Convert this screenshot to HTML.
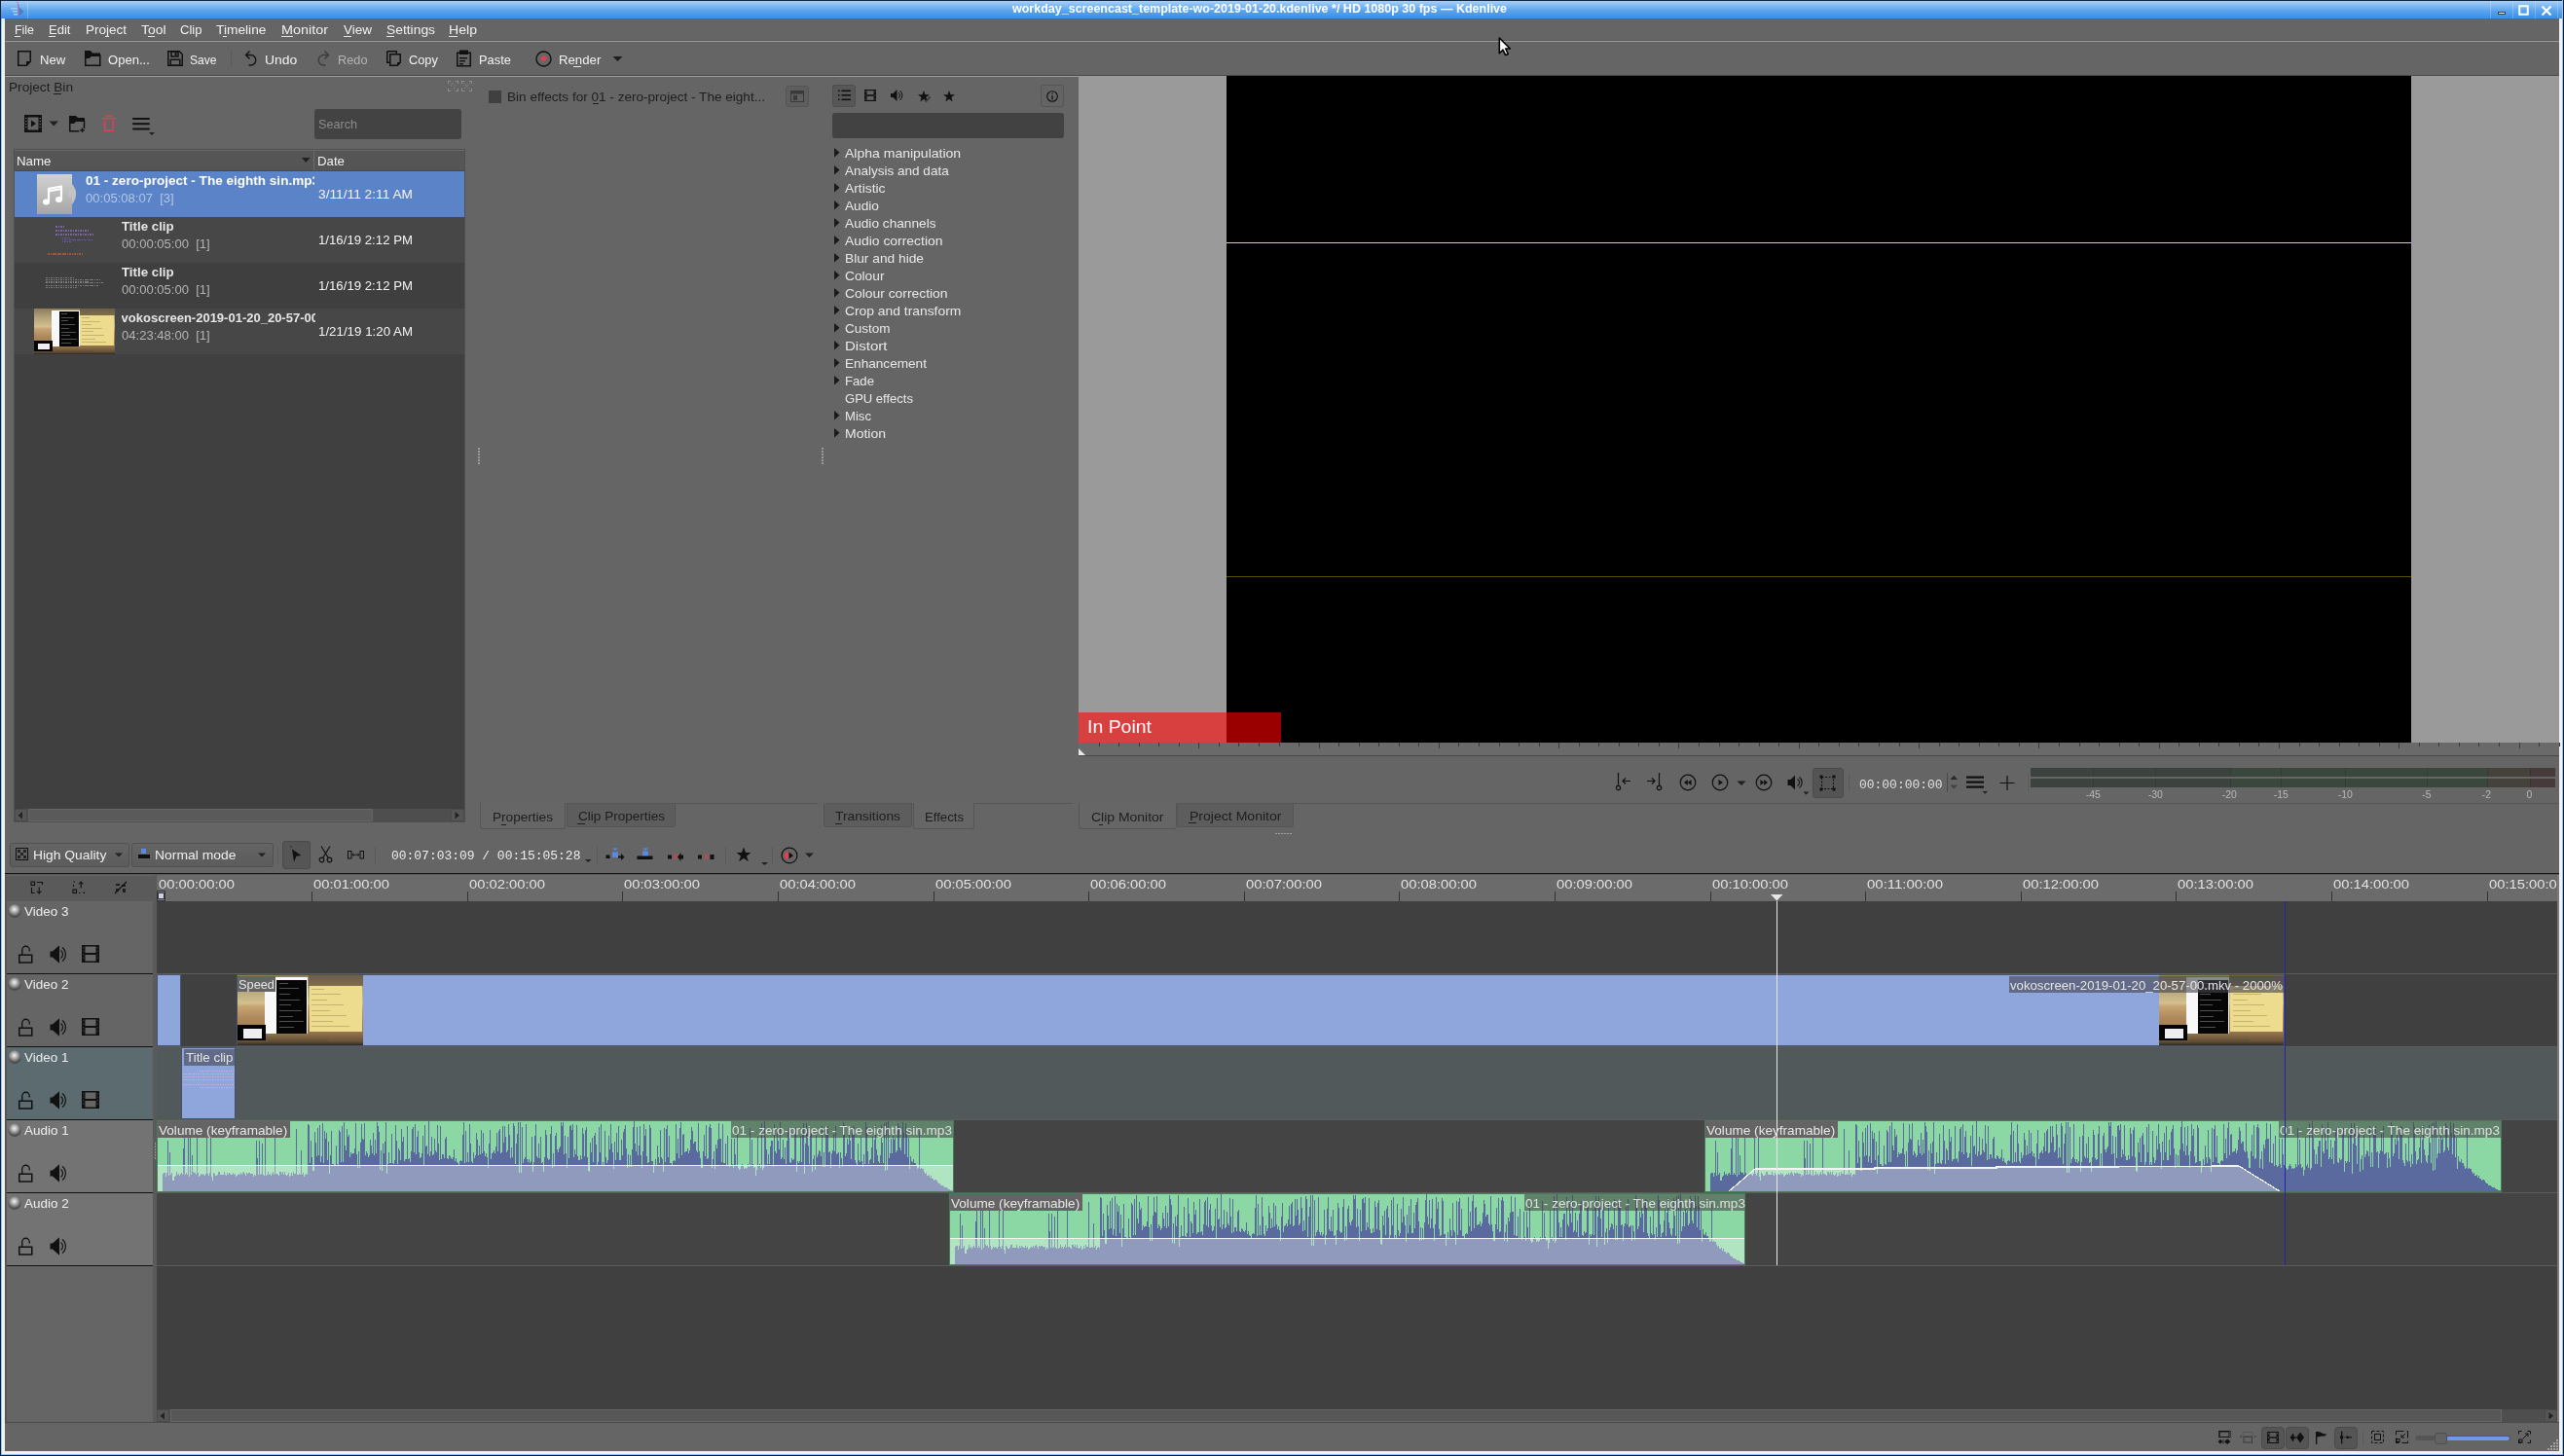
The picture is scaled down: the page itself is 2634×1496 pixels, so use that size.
<!DOCTYPE html><html><head><meta charset="utf-8"><style>
*{margin:0;padding:0;box-sizing:border-box}
html,body{width:2634px;height:1496px;overflow:hidden;background:#646464;font-family:"Liberation Sans",sans-serif}
div,svg{position:absolute}
.t{white-space:pre}
</style></head><body><div id="root" style="left:0;top:0;width:2634px;height:1496px;overflow:hidden;will-change:transform;background:#646464"><div style="left:0px;top:0px;width:2634px;height:1496px;background:#0c1c30;"></div><div style="left:1px;top:0px;width:2632px;height:1495px;background:#8cc2f8;"></div><div style="left:2px;top:19px;width:2630px;height:1475px;background:#f2f2f2;"></div><div style="left:5px;top:19px;width:2624px;height:1472px;background:#656565;"></div><div style="left:1px;top:0px;width:2631px;height:19px;background:linear-gradient(#a8d0f8 0px,#90c2f4 3px,#5aa4ee 10px,#3a8ae2 19px);border-top:1px solid #10243c"></div><div class="t" style="left:1040px;top:3.42px;font-size:12.5px;line-height:12.5px;color:#fff;font-weight:bold;transform:scaleX(1.0003);transform-origin:0 0;">workday_screencast_template-wo-2019-01-20.kdenlive */ HD 1080p 30 fps — Kdenlive</div><svg style="left:9px;top:2px;" width="22" height="16" viewBox="0 0 22 16"><rect x="2" y="6" width="7" height="1.5" fill="#a8cff8"/><rect x="4" y="9" width="6" height="1.5" fill="#a8cff8"/><rect x="5" y="12" width="5" height="1.5" fill="#a8cff8"/><rect x="9" y="2" width="1.5" height="13" fill="#a07ab0"/><path d="M9 1l-1.5 -1h3z" fill="#e06060"/><path d="M10.5 5l5 5l-5 5z" fill="#4a80c0"/></svg><div style="left:28px;top:2px;width:1px;height:17px;background:rgba(255,255,255,0.25);"></div><div style="left:2558px;top:1px;width:1px;height:18px;background:rgba(255,255,255,0.22);"></div><div style="left:2581px;top:1px;width:1px;height:18px;background:rgba(255,255,255,0.22);"></div><div style="left:2604px;top:1px;width:1px;height:18px;background:rgba(255,255,255,0.22);"></div><div style="left:2627px;top:1px;width:1px;height:18px;background:rgba(255,255,255,0.22);"></div><div style="left:2566px;top:12px;width:8px;height:3px;background:#fff;border:0.5px solid #345"></div><svg style="left:2587px;top:5px;" width="11" height="11" viewBox="0 0 11 11"><rect x="1.25" y="1.25" width="8.5" height="8.5" fill="none" stroke="#fff" stroke-width="2"/></svg><svg style="left:2610px;top:5px;" width="12" height="12" viewBox="0 0 12 12"><path d="M1.5 1.5L10.5 10.5M10.5 1.5L1.5 10.5" stroke="#fff" stroke-width="2.2"/></svg><div class="t" style="left:15px;top:24.00px;font-size:13px;line-height:13px;color:#f0f0f0;transform:scaleX(0.9545);transform-origin:0 0;">File</div><div class="t" style="left:50px;top:24.00px;font-size:13px;line-height:13px;color:#f0f0f0;transform:scaleX(1.0042);transform-origin:0 0;">Edit</div><div class="t" style="left:88.3px;top:24.00px;font-size:13px;line-height:13px;color:#f0f0f0;transform:scaleX(1.0378);transform-origin:0 0;">Project</div><div class="t" style="left:144.9px;top:24.00px;font-size:13px;line-height:13px;color:#f0f0f0;transform:scaleX(1.0688);transform-origin:0 0;">Tool</div><div class="t" style="left:185.3px;top:24.00px;font-size:13px;line-height:13px;color:#f0f0f0;transform:scaleX(1.0042);transform-origin:0 0;">Clip</div><div class="t" style="left:222.1px;top:24.00px;font-size:13px;line-height:13px;color:#f0f0f0;transform:scaleX(1.0584);transform-origin:0 0;">Timeline</div><div class="t" style="left:289px;top:24.00px;font-size:13px;line-height:13px;color:#f0f0f0;transform:scaleX(1.1070);transform-origin:0 0;">Monitor</div><div class="t" style="left:353.2px;top:24.00px;font-size:13px;line-height:13px;color:#f0f0f0;transform:scaleX(1.0375);transform-origin:0 0;">View</div><div class="t" style="left:397.2px;top:24.00px;font-size:13px;line-height:13px;color:#f0f0f0;transform:scaleX(1.0642);transform-origin:0 0;">Settings</div><div class="t" style="left:460.7px;top:24.00px;font-size:13px;line-height:13px;color:#f0f0f0;transform:scaleX(1.0841);transform-origin:0 0;">Help</div><div style="left:15px;top:37px;width:6px;height:1px;background:#e6e6e6;"></div><div style="left:50px;top:37px;width:7px;height:1px;background:#e6e6e6;"></div><div style="left:108px;top:37px;width:4px;height:1px;background:#e6e6e6;"></div><div style="left:152px;top:37px;width:7px;height:1px;background:#e6e6e6;"></div><div style="left:229px;top:37px;width:4px;height:1px;background:#e6e6e6;"></div><div style="left:289px;top:37px;width:12px;height:1px;background:#e6e6e6;"></div><div style="left:353px;top:37px;width:8px;height:1px;background:#e6e6e6;"></div><div style="left:397px;top:37px;width:8px;height:1px;background:#e6e6e6;"></div><div style="left:461px;top:37px;width:9px;height:1px;background:#e6e6e6;"></div><div style="left:589px;top:68px;width:8px;height:1px;background:#e6e6e6;"></div><div style="left:5px;top:41px;width:2624px;height:1px;background:#5a5a5a;"></div><div style="left:5px;top:42px;width:2624px;height:1px;background:#9c9c9c;"></div><div style="left:5px;top:77px;width:2624px;height:1px;background:#484848;"></div><div style="left:5px;top:78px;width:2624px;height:1px;background:#a0a0a0;"></div><div class="t" style="left:40.6px;top:54.70px;font-size:13px;line-height:13px;color:#f2f2f2;transform:scaleX(1.0071);transform-origin:0 0;">New</div><div class="t" style="left:110.5px;top:54.70px;font-size:13px;line-height:13px;color:#f2f2f2;transform:scaleX(1.0037);transform-origin:0 0;">Open...</div><div class="t" style="left:195.3px;top:54.70px;font-size:13px;line-height:13px;color:#f2f2f2;transform:scaleX(0.9278);transform-origin:0 0;">Save</div><div class="t" style="left:272px;top:54.70px;font-size:13px;line-height:13px;color:#f2f2f2;transform:scaleX(1.0710);transform-origin:0 0;">Undo</div><div class="t" style="left:347.2px;top:54.70px;font-size:13px;line-height:13px;color:#b4b4b4;transform:scaleX(0.9809);transform-origin:0 0;">Redo</div><div class="t" style="left:420.4px;top:54.70px;font-size:13px;line-height:13px;color:#f2f2f2;transform:scaleX(0.9816);transform-origin:0 0;">Copy</div><div class="t" style="left:492.4px;top:54.70px;font-size:13px;line-height:13px;color:#f2f2f2;transform:scaleX(0.9895);transform-origin:0 0;">Paste</div><div class="t" style="left:574.4px;top:54.70px;font-size:13px;line-height:13px;color:#f2f2f2;transform:scaleX(1.0151);transform-origin:0 0;">Render</div><svg style="left:17px;top:52px;" width="16" height="16" viewBox="0 0 16 16"><path d="M1.75 0.75h12.5v10.5l-4 4h-8.5z" fill="none" stroke="#111" stroke-width="1.5"/><path d="M14.5 11h-4.5v4.5z" fill="#111"/></svg><svg style="left:87px;top:52px;" width="17" height="16" viewBox="0 0 17 16"><path d="M0.75 4.75h15v10.5h-15z" fill="none" stroke="#111" stroke-width="1.5"/><path d="M0 0h6l2 2.5h8v3.5h-9l-2.5 2h-4.5z" fill="#111"/></svg><svg style="left:172px;top:52px;" width="16" height="16" viewBox="0 0 16 16"><path d="M0.75 0.75h11.5l3 3v11.5h-14.5z" fill="none" stroke="#111" stroke-width="1.5"/><rect x="4" y="1" width="7" height="5" fill="none" stroke="#111" stroke-width="1.5"/><rect x="7.5" y="2" width="2" height="3" fill="#111"/><rect x="3.25" y="9.25" width="9.5" height="6" fill="none" stroke="#111" stroke-width="1.5"/></svg><div style="left:237px;top:52px;width:1px;height:17px;background:#5a5a5a;"></div><svg style="left:250px;top:51px;" width="15" height="18" viewBox="0 0 15 18"><path d="M3 5.5h4.5a5.25 5.25 0 0 1 0 10.5h-2" fill="none" stroke="#111" stroke-width="1.4"/><path d="M6.5 1.5L2.5 5.5L6.5 9.5" fill="none" stroke="#111" stroke-width="1.4"/></svg><svg style="left:325px;top:51px;" width="15" height="18" viewBox="0 0 15 18"><path d="M12 5.5h-4.5a5.25 5.25 0 0 0 0 10.5h2" fill="none" stroke="#3c3c3c" stroke-width="1.4"/><path d="M8.5 1.5L12.5 5.5L8.5 9.5" fill="none" stroke="#3c3c3c" stroke-width="1.4"/></svg><svg style="left:397px;top:52px;" width="16" height="16" viewBox="0 0 16 16"><path d="M0.75 0.75h9.5v2.5" fill="none" stroke="#111" stroke-width="1.5"/><path d="M0.75 0.75v11.5h2.5" fill="none" stroke="#111" stroke-width="1.5"/><path d="M3.75 3.75h10.5v8.5l-3 3h-7.5z" fill="none" stroke="#111" stroke-width="1.5"/><path d="M14.5 12h-3.5v3.5z" fill="#111"/></svg><svg style="left:469px;top:51px;" width="16" height="18" viewBox="0 0 16 18"><rect x="0.75" y="3.25" width="13.5" height="13.5" fill="none" stroke="#111" stroke-width="1.5"/><rect x="3" y="0.5" width="9" height="4.5" fill="#111"/><rect x="3" y="8" width="8" height="1.4" fill="#111"/><rect x="3" y="11" width="6" height="1.4" fill="#111"/><rect x="3" y="14" width="4" height="1.4" fill="#111"/></svg><svg style="left:550px;top:52px;" width="17" height="17" viewBox="0 0 17 17"><circle cx="8.5" cy="8.5" r="7.5" fill="none" stroke="#111" stroke-width="1.4"/><circle cx="8.5" cy="8" r="2.8" fill="#e04050"/></svg><svg style="left:629px;top:57px;" width="11" height="7" viewBox="0 0 11 7"><path d="M0.5 1h10l-5 5z" fill="#1e1e1e"/></svg><div class="t" style="left:9px;top:82.90px;font-size:13px;line-height:13px;color:#1e1e1e;transform:scaleX(1.0497);transform-origin:0 0;">Project Bin</div><div style="left:55px;top:96px;width:8px;height:1px;background:#1e1e1e;"></div><svg style="left:460px;top:83px;" width="26" height="12" viewBox="0 0 26 12"><g fill="none" stroke="#b0b0b0" stroke-width="1" opacity="0.55"><path d="M0.5 3v-2.5h2.5M8 0.5h2.5v2.5M10.5 8v2.5h-2.5M3 10.5h-2.5v-2.5"/><path d="M14.5 3v-2.5h2.5M22 0.5h2.5v2.5M24.5 8v2.5h-2.5M17 10.5h-2.5v-2.5"/><path d="M16.5 2.5l6 6M22.5 2.5l-6 6" stroke-dasharray="1 1.2"/></g><g fill="#b0b0b0" opacity="0.6"><rect x="4.5" y="2" width="1" height="1"/><rect x="3" y="4.5" width="1" height="1"/><rect x="6.5" y="4.5" width="1" height="1"/><rect x="6" y="7.5" width="1" height="1"/></g></svg><svg style="left:25px;top:118px;" width="18" height="18" viewBox="0 0 18 18"><rect x="0" y="0" width="18" height="18" fill="#111"/><rect x="3.5" y="2.5" width="11" height="13" fill="#646464"/><g fill="#646464"><rect x="1" y="3" width="1.5" height="1.2"/><rect x="1" y="6" width="1.5" height="1.2"/><rect x="1" y="9" width="1.5" height="1.2"/><rect x="1" y="12" width="1.5" height="1.2"/><rect x="15.5" y="3" width="1.5" height="1.2"/><rect x="15.5" y="6" width="1.5" height="1.2"/><rect x="15.5" y="9" width="1.5" height="1.2"/><rect x="15.5" y="12" width="1.5" height="1.2"/></g><path d="M7 5.5l5 3.5l-5 3.5z" fill="#111"/></svg><svg style="left:50px;top:124px;" width="11" height="7" viewBox="0 0 11 7"><path d="M0.5 0.5h9.5l-4.75 5z" fill="#222"/></svg><svg style="left:71px;top:119px;" width="17" height="17" viewBox="0 0 17 17"><path d="M0.75 3v12.75h9.5" fill="none" stroke="#111" stroke-width="1.5"/><path d="M15.5 5v8" stroke="#111" stroke-width="1.5"/><path d="M0 0h7l2 2h7v4h-9l-2 2h-5z" fill="#111"/><path d="M13.5 12.5v4.5M11.25 14.75h4.5" stroke="#111" stroke-width="1.3"/></svg><svg style="left:105px;top:118px;" width="15" height="18" viewBox="0 0 15 18"><path d="M4 2.5v-1.5h6v1.5" fill="none" stroke="#e2404e" stroke-width="1.3"/><rect x="0" y="3" width="14" height="1.3" fill="#e2404e"/><path d="M2.5 5.5v10.75h8.75v-10.75" fill="none" stroke="#e2404e" stroke-width="1.3"/></svg><svg style="left:136px;top:120px;" width="24" height="20" viewBox="0 0 24 20"><rect x="0" y="1" width="18" height="2" rx="1" fill="#111"/><rect x="0" y="6.3" width="18" height="2" rx="1" fill="#111"/><rect x="0" y="11.5" width="18" height="2" rx="1" fill="#111"/><path d="M17 16h6l-3 3z" fill="#222"/></svg><div style="left:323px;top:112px;width:151px;height:31px;background:#434343;border-radius:3px"></div><div class="t" style="left:327px;top:120.50px;font-size:13px;line-height:13px;color:#8c8c8c;transform:scaleX(0.9708);transform-origin:0 0;">Search</div><div style="left:14px;top:153px;width:464px;height:692px;background:#404040;border:1px solid #505050"></div><div style="left:15px;top:154px;width:462px;height:22px;background:#555555;border-bottom:1px solid #4a4a4a"></div><div style="left:15px;top:154px;width:462px;height:1px;background:#6a6a6a;"></div><div style="left:322px;top:154px;width:1px;height:21px;background:#6c6c6c;"></div><div class="t" style="left:17px;top:159.40px;font-size:13px;line-height:13px;color:#f0f0f0;transform:scaleX(1.0234);transform-origin:0 0;">Name</div><svg style="left:310px;top:162px;" width="9" height="6" viewBox="0 0 9 6"><path d="M0 0h8.5l-4.25 5z" fill="#222"/></svg><div class="t" style="left:326px;top:159.40px;font-size:13px;line-height:13px;color:#f0f0f0;transform:scaleX(1.0193);transform-origin:0 0;">Date</div><div style="left:15px;top:176px;width:462px;height:47px;background:#5b83c7;"></div><div style="left:15px;top:223px;width:462px;height:47px;background:#474747;"></div><div style="left:15px;top:270px;width:462px;height:47px;background:#3f3f3f;"></div><div style="left:15px;top:317px;width:462px;height:47px;background:#474747;"></div><svg style="left:37px;top:178px;" width="44" height="43" viewBox="0 0 44 43"><defs><linearGradient id="gmp" x1="0" y1="0" x2="0" y2="1"><stop offset="0" stop-color="#d2d2d2"/><stop offset="1" stop-color="#a6a6a6"/></linearGradient></defs><path d="M30 7a15 15 0 0 1 0 29z" fill="#c4c4c4"/><rect x="1" y="1" width="36" height="41" fill="url(#gmp)"/><circle cx="37" cy="21" r="4" fill="#c4c4c4"/><path d="M13 29v-13l13 -2.5v13" fill="none" stroke="#fff" stroke-width="2.2"/><path d="M13 18.5l13 -2.5" stroke="#fff" stroke-width="2.2"/><ellipse cx="10.5" cy="29.5" rx="3.5" ry="3" fill="#fff"/><ellipse cx="23.5" cy="27" rx="3.5" ry="3" fill="#fff"/></svg><div style="left:88.2px;top:175.30px;width:234.8px;height:21px;overflow:hidden"><div class="t" style="left:88.2px;top:179.30px;font-size:13px;line-height:13px;color:#ffffff;font-weight:bold;transform:scaleX(1.0416);transform-origin:0 0;;left:0;top:4px">01 - zero-project - The eighth sin.mp3</div></div><div class="t" style="left:88.2px;top:196.80px;font-size:13px;line-height:13px;color:#b4c6e6;transform:scaleX(1.0036);transform-origin:0 0;">00:05:08:07  [3]</div><div class="t" style="left:327px;top:193.20px;font-size:13px;line-height:13px;color:#f4f4f4;transform:scaleX(1.0567);transform-origin:0 0;">3/11/11 2:11 AM</div><div style="left:57px;top:232px;width:10px;height:2px;background:repeating-linear-gradient(90deg,#9a7ae0 0 1.5px,transparent 1.5px 2.5px);opacity:0.6"></div><div style="left:57px;top:236px;width:35px;height:2px;background:repeating-linear-gradient(90deg,#9a7ae0 0 1.5px,transparent 1.5px 2.5px);opacity:0.6"></div><div style="left:57px;top:240px;width:39px;height:2px;background:repeating-linear-gradient(90deg,#9a7ae0 0 1.5px,transparent 1.5px 2.5px);opacity:0.6"></div><div style="left:64px;top:244px;width:8px;height:1px;background:repeating-linear-gradient(90deg,#8a6ad0 0 1.5px,transparent 1.5px 2.5px);opacity:0.6"></div><div style="left:64px;top:246px;width:32px;height:1px;background:repeating-linear-gradient(90deg,#8a6ad0 0 1.5px,transparent 1.5px 2.5px);opacity:0.6"></div><div style="left:64px;top:248px;width:10px;height:1px;background:repeating-linear-gradient(90deg,#8a6ad0 0 1.5px,transparent 1.5px 2.5px);opacity:0.6"></div><div style="left:49px;top:260px;width:36px;height:2px;background:repeating-linear-gradient(90deg,#e06030 0 1.5px,transparent 1.5px 2.5px);opacity:0.6"></div><div class="t" style="left:124.6px;top:226.00px;font-size:13px;line-height:13px;color:#e6e6e6;font-weight:bold;transform:scaleX(1.0213);transform-origin:0 0;">Title clip</div><div class="t" style="left:124.6px;top:244.20px;font-size:13px;line-height:13px;color:#b4b4b4;transform:scaleX(1.0036);transform-origin:0 0;">00:00:05:00  [1]</div><div class="t" style="left:327px;top:240.00px;font-size:13px;line-height:13px;color:#f4f4f4;transform:scaleX(1.0165);transform-origin:0 0;">1/16/19 2:12 PM</div><div style="left:47px;top:285px;width:30px;height:1px;background:repeating-linear-gradient(90deg,#c8c8c8 0 1.5px,transparent 1.5px 2.5px);opacity:0.45"></div><div style="left:47px;top:287px;width:56px;height:1px;background:repeating-linear-gradient(90deg,#c8c8c8 0 1.5px,transparent 1.5px 2.5px);opacity:0.45"></div><div style="left:47px;top:289px;width:44px;height:1px;background:repeating-linear-gradient(90deg,#c8c8c8 0 1.5px,transparent 1.5px 2.5px);opacity:0.45"></div><div style="left:47px;top:290px;width:60px;height:1px;background:repeating-linear-gradient(90deg,#c8c8c8 0 1.5px,transparent 1.5px 2.5px);opacity:0.45"></div><div style="left:47px;top:293px;width:54px;height:1px;background:repeating-linear-gradient(90deg,#c8c8c8 0 1.5px,transparent 1.5px 2.5px);opacity:0.45"></div><div style="left:47px;top:295px;width:33px;height:1px;background:repeating-linear-gradient(90deg,#c8c8c8 0 1.5px,transparent 1.5px 2.5px);opacity:0.45"></div><div class="t" style="left:124.6px;top:273.00px;font-size:13px;line-height:13px;color:#e6e6e6;font-weight:bold;transform:scaleX(1.0213);transform-origin:0 0;">Title clip</div><div class="t" style="left:124.6px;top:291.20px;font-size:13px;line-height:13px;color:#b4b4b4;transform:scaleX(1.0036);transform-origin:0 0;">00:00:05:00  [1]</div><div class="t" style="left:327px;top:287.00px;font-size:13px;line-height:13px;color:#f4f4f4;transform:scaleX(1.0165);transform-origin:0 0;">1/16/19 2:12 PM</div><div style="left:35.0px;top:317.0px;width:83.0px;height:47.0px;background:linear-gradient(#8c7c5a 0%,#b4a47a 20%,#d2c08e 40%,#c8a674 44%,#b08a5c 60%,#9a7850 80%,#6a5438 94%,#2e2a26 100%);"></div><div style="left:82.0px;top:317.0px;width:36.0px;height:7.0px;background:linear-gradient(#6e5e44,#7e6c4e);"></div><div style="left:53.0px;top:318.5px;width:28.5px;height:37.5px;background:#f8f8f8;"></div><div style="left:61.0px;top:320.0px;width:20.0px;height:36.0px;background:#060606;"></div><div style="left:62.5px;top:322.0px;width:6.0px;height:0.6px;background:#9a9a9a;opacity:0.5"></div><div style="left:62.5px;top:325.7px;width:13.0px;height:0.6px;background:#9a9a9a;opacity:0.5"></div><div style="left:62.5px;top:329.4px;width:7.0px;height:0.6px;background:#9a9a9a;opacity:0.5"></div><div style="left:62.5px;top:333.1px;width:14.0px;height:0.6px;background:#9a9a9a;opacity:0.5"></div><div style="left:62.5px;top:336.8px;width:8.0px;height:0.6px;background:#9a9a9a;opacity:0.5"></div><div style="left:62.5px;top:340.5px;width:15.0px;height:0.6px;background:#9a9a9a;opacity:0.5"></div><div style="left:62.5px;top:344.2px;width:9.0px;height:0.6px;background:#9a9a9a;opacity:0.5"></div><div style="left:62.5px;top:347.9px;width:16.0px;height:0.6px;background:#9a9a9a;opacity:0.5"></div><div style="left:62.5px;top:351.6px;width:10.0px;height:0.6px;background:#9a9a9a;opacity:0.5"></div><div style="left:82.3px;top:324.0px;width:35.0px;height:31.0px;background:#eedc8e;"></div><div style="left:84.0px;top:326.0px;width:8.0px;height:0.6px;background:#a89860;opacity:0.6"></div><div style="left:84.0px;top:329.6px;width:19.0px;height:0.6px;background:#a89860;opacity:0.6"></div><div style="left:84.0px;top:333.2px;width:10.0px;height:0.6px;background:#a89860;opacity:0.6"></div><div style="left:84.0px;top:336.8px;width:21.0px;height:0.6px;background:#a89860;opacity:0.6"></div><div style="left:84.0px;top:340.4px;width:12.0px;height:0.6px;background:#a89860;opacity:0.6"></div><div style="left:84.0px;top:344.0px;width:23.0px;height:0.6px;background:#a89860;opacity:0.6"></div><div style="left:84.0px;top:347.6px;width:14.0px;height:0.6px;background:#a89860;opacity:0.6"></div><div style="left:84.0px;top:351.2px;width:25.0px;height:0.6px;background:#a89860;opacity:0.6"></div><div style="left:35.0px;top:350.0px;width:18.8px;height:10.5px;background:#040404;"></div><div style="left:38.7px;top:352.8px;width:12.3px;height:6.5px;background:#eeeef2;"></div><div style="left:55.0px;top:357.0px;width:40.0px;height:5.0px;background:linear-gradient(#8a7048,#5a4830);"></div><div style="left:124.6px;top:316.00px;width:199.4px;height:21px;overflow:hidden"><div class="t" style="left:124.6px;top:320.00px;font-size:13px;line-height:13px;color:#e6e6e6;font-weight:bold;;left:0;top:4px">vokoscreen-2019-01-20_20-57-00.mkv</div></div><div class="t" style="left:124.6px;top:338.20px;font-size:13px;line-height:13px;color:#b4b4b4;transform:scaleX(1.0036);transform-origin:0 0;">04:23:48:00  [1]</div><div class="t" style="left:327px;top:334.00px;font-size:13px;line-height:13px;color:#f4f4f4;transform:scaleX(1.0243);transform-origin:0 0;">1/21/19 1:20 AM</div><div style="left:15px;top:831px;width:462px;height:13px;background:#4e4e4e;"></div><div style="left:15px;top:831px;width:13px;height:13px;background:#555;border:1px solid #4a4a4a"></div><svg style="left:18px;top:834px;" width="6" height="8" viewBox="0 0 6 8"><path d="M5 0v7.5l-4.5-3.75z" fill="#222"/></svg><div style="left:29px;top:831px;width:354px;height:13px;background:#5a5a5a;border:1px solid #666;border-radius:1px"></div><div style="left:463px;top:831px;width:14px;height:13px;background:#555;border:1px solid #4a4a4a"></div><svg style="left:467px;top:834px;" width="6" height="8" viewBox="0 0 6 8"><path d="M0.5 0v7.5l4.5-3.75z" fill="#222"/></svg><div style="left:491px;top:460px;width:2px;height:2px;background:#9a9a9a;"></div><div style="left:844px;top:460px;width:2px;height:2px;background:#9a9a9a;"></div><div style="left:491px;top:463px;width:2px;height:2px;background:#9a9a9a;"></div><div style="left:844px;top:463px;width:2px;height:2px;background:#9a9a9a;"></div><div style="left:491px;top:466px;width:2px;height:2px;background:#9a9a9a;"></div><div style="left:844px;top:466px;width:2px;height:2px;background:#9a9a9a;"></div><div style="left:491px;top:469px;width:2px;height:2px;background:#9a9a9a;"></div><div style="left:844px;top:469px;width:2px;height:2px;background:#9a9a9a;"></div><div style="left:491px;top:472px;width:2px;height:2px;background:#9a9a9a;"></div><div style="left:844px;top:472px;width:2px;height:2px;background:#9a9a9a;"></div><div style="left:491px;top:475px;width:2px;height:2px;background:#9a9a9a;"></div><div style="left:844px;top:475px;width:2px;height:2px;background:#9a9a9a;"></div><div style="left:502px;top:93px;width:13px;height:13px;background:#404040;"></div><div class="t" style="left:521px;top:93.20px;font-size:13px;line-height:13px;color:#1e1e1e;transform:scaleX(1.0438);transform-origin:0 0;">Bin effects for 01 - zero-project - The eight...</div><div style="left:609px;top:106px;width:6px;height:1px;background:#1e1e1e;"></div><div style="left:807px;top:88px;width:24px;height:22px;background:#5e5e5e;border:1px solid #555;border-radius:3px"></div><svg style="left:812px;top:93px;" width="14" height="12" viewBox="0 0 14 12"><rect x="0.5" y="0.5" width="13" height="11" fill="none" stroke="#3a3a3a"/><rect x="0.5" y="0.5" width="13" height="3" fill="#3a3a3a"/><rect x="3" y="5" width="4" height="5" fill="#3a3a3a"/></svg><div style="left:855px;top:87px;width:24px;height:23px;background:#575757;border:1px solid #4e4e4e;border-radius:3px"></div><svg style="left:861px;top:92px;" width="13" height="12" viewBox="0 0 13 12"><g fill="#111"><rect x="0" y="0.5" width="1.6" height="1.6"/><rect x="0" y="5" width="1.6" height="1.6"/><rect x="0" y="9.5" width="1.6" height="1.6"/><rect x="3.5" y="0.5" width="9.5" height="1.6"/><rect x="3.5" y="5" width="9.5" height="1.6"/><rect x="3.5" y="9.5" width="9.5" height="1.6"/></g></svg><svg style="left:888px;top:92px;" width="12" height="12" viewBox="0 0 12 12"><rect x="0" y="0" width="12" height="12" fill="#111"/><rect x="2.5" y="1.2" width="7" height="4" fill="#646464"/><rect x="2.5" y="6.8" width="7" height="4" fill="#646464"/><g fill="#646464"><rect x="0.7" y="1.5" width="1" height="1"/><rect x="0.7" y="5.5" width="1" height="1"/><rect x="0.7" y="9.5" width="1" height="1"/><rect x="10.3" y="1.5" width="1" height="1"/><rect x="10.3" y="5.5" width="1" height="1"/><rect x="10.3" y="9.5" width="1" height="1"/></g></svg><svg style="left:915px;top:92px;" width="13" height="12" viewBox="0 0 13 12"><path d="M0 4h2.5l4-4v12l-4-4h-2.5z" fill="#111"/><path d="M8 3a4 4 0 0 1 0 6" fill="none" stroke="#111" stroke-width="1"/><path d="M9.5 1a6.5 6.5 0 0 1 0 10" fill="none" stroke="#111" stroke-width="1"/></svg><svg style="left:943px;top:93px;" width="13" height="12" viewBox="0 0 13 12"><path d="M6 0L7.5 4.3H12L8.4 7L9.7 11.5L6 8.8L2.3 11.5L3.6 7L0 4.3H4.5Z" fill="#111"/><path d="M7 11l5-5l1.2 1.2-5 5z" fill="#3a3a3a"/></svg><svg style="left:969px;top:93px;" width="12" height="12" viewBox="0 0 12 12"><path d="M6 0L7.5 4.3H12L8.4 7L9.7 11.5L6 8.8L2.3 11.5L3.6 7L0 4.3H4.5Z" fill="#111"/></svg><div style="left:1069px;top:87px;width:24px;height:23px;background:#646464;border:1px solid #555;border-radius:3px"></div><svg style="left:1075px;top:93px;" width="12" height="12" viewBox="0 0 12 12"><circle cx="6" cy="6" r="5.3" fill="none" stroke="#111" stroke-width="1.1"/><rect x="5.4" y="5" width="1.2" height="4.5" fill="#111"/><rect x="5.4" y="2.6" width="1.2" height="1.3" fill="#111"/></svg><div style="left:855px;top:116px;width:238px;height:26px;background:#424242;border-radius:3px"></div><svg style="left:857px;top:152px;" width="6" height="10" viewBox="0 0 6 10"><path d="M0 0v9.5l5.5-4.75z" fill="#1a1a1a"/></svg><div class="t" style="left:868px;top:151.00px;font-size:13px;line-height:13px;color:#e8e8e8;transform:scaleX(1.0775);transform-origin:0 0;">Alpha manipulation</div><svg style="left:857px;top:170px;" width="6" height="10" viewBox="0 0 6 10"><path d="M0 0v9.5l5.5-4.75z" fill="#1a1a1a"/></svg><div class="t" style="left:868px;top:169.00px;font-size:13px;line-height:13px;color:#e8e8e8;transform:scaleX(1.0394);transform-origin:0 0;">Analysis and data</div><svg style="left:857px;top:188px;" width="6" height="10" viewBox="0 0 6 10"><path d="M0 0v9.5l5.5-4.75z" fill="#1a1a1a"/></svg><div class="t" style="left:868px;top:187.00px;font-size:13px;line-height:13px;color:#e8e8e8;transform:scaleX(1.0641);transform-origin:0 0;">Artistic</div><svg style="left:857px;top:206px;" width="6" height="10" viewBox="0 0 6 10"><path d="M0 0v9.5l5.5-4.75z" fill="#1a1a1a"/></svg><div class="t" style="left:868px;top:205.00px;font-size:13px;line-height:13px;color:#e8e8e8;transform:scaleX(1.0521);transform-origin:0 0;">Audio</div><svg style="left:857px;top:224px;" width="6" height="10" viewBox="0 0 6 10"><path d="M0 0v9.5l5.5-4.75z" fill="#1a1a1a"/></svg><div class="t" style="left:868px;top:223.00px;font-size:13px;line-height:13px;color:#e8e8e8;transform:scaleX(1.0524);transform-origin:0 0;">Audio channels</div><svg style="left:857px;top:242px;" width="6" height="10" viewBox="0 0 6 10"><path d="M0 0v9.5l5.5-4.75z" fill="#1a1a1a"/></svg><div class="t" style="left:868px;top:241.00px;font-size:13px;line-height:13px;color:#e8e8e8;transform:scaleX(1.0695);transform-origin:0 0;">Audio correction</div><svg style="left:857px;top:260px;" width="6" height="10" viewBox="0 0 6 10"><path d="M0 0v9.5l5.5-4.75z" fill="#1a1a1a"/></svg><div class="t" style="left:868px;top:259.00px;font-size:13px;line-height:13px;color:#e8e8e8;transform:scaleX(1.0569);transform-origin:0 0;">Blur and hide</div><svg style="left:857px;top:278px;" width="6" height="10" viewBox="0 0 6 10"><path d="M0 0v9.5l5.5-4.75z" fill="#1a1a1a"/></svg><div class="t" style="left:868px;top:277.00px;font-size:13px;line-height:13px;color:#e8e8e8;transform:scaleX(1.0571);transform-origin:0 0;">Colour</div><svg style="left:857px;top:296px;" width="6" height="10" viewBox="0 0 6 10"><path d="M0 0v9.5l5.5-4.75z" fill="#1a1a1a"/></svg><div class="t" style="left:868px;top:295.00px;font-size:13px;line-height:13px;color:#e8e8e8;transform:scaleX(1.0655);transform-origin:0 0;">Colour correction</div><svg style="left:857px;top:314px;" width="6" height="10" viewBox="0 0 6 10"><path d="M0 0v9.5l5.5-4.75z" fill="#1a1a1a"/></svg><div class="t" style="left:868px;top:313.00px;font-size:13px;line-height:13px;color:#e8e8e8;transform:scaleX(1.0650);transform-origin:0 0;">Crop and transform</div><svg style="left:857px;top:332px;" width="6" height="10" viewBox="0 0 6 10"><path d="M0 0v9.5l5.5-4.75z" fill="#1a1a1a"/></svg><div class="t" style="left:868px;top:331.00px;font-size:13px;line-height:13px;color:#e8e8e8;transform:scaleX(1.0380);transform-origin:0 0;">Custom</div><svg style="left:857px;top:350px;" width="6" height="10" viewBox="0 0 6 10"><path d="M0 0v9.5l5.5-4.75z" fill="#1a1a1a"/></svg><div class="t" style="left:868px;top:349.00px;font-size:13px;line-height:13px;color:#e8e8e8;transform:scaleX(1.1581);transform-origin:0 0;">Distort</div><svg style="left:857px;top:368px;" width="6" height="10" viewBox="0 0 6 10"><path d="M0 0v9.5l5.5-4.75z" fill="#1a1a1a"/></svg><div class="t" style="left:868px;top:367.00px;font-size:13px;line-height:13px;color:#e8e8e8;transform:scaleX(1.0467);transform-origin:0 0;">Enhancement</div><svg style="left:857px;top:386px;" width="6" height="10" viewBox="0 0 6 10"><path d="M0 0v9.5l5.5-4.75z" fill="#1a1a1a"/></svg><div class="t" style="left:868px;top:385.00px;font-size:13px;line-height:13px;color:#e8e8e8;transform:scaleX(1.0121);transform-origin:0 0;">Fade</div><div class="t" style="left:868px;top:403.00px;font-size:13px;line-height:13px;color:#e8e8e8;transform:scaleX(1.0022);transform-origin:0 0;">GPU effects</div><svg style="left:857px;top:422px;" width="6" height="10" viewBox="0 0 6 10"><path d="M0 0v9.5l5.5-4.75z" fill="#1a1a1a"/></svg><div class="t" style="left:868px;top:421.00px;font-size:13px;line-height:13px;color:#e8e8e8;transform:scaleX(1.0105);transform-origin:0 0;">Misc</div><svg style="left:857px;top:440px;" width="6" height="10" viewBox="0 0 6 10"><path d="M0 0v9.5l5.5-4.75z" fill="#1a1a1a"/></svg><div class="t" style="left:868px;top:439.00px;font-size:13px;line-height:13px;color:#e8e8e8;transform:scaleX(1.0761);transform-origin:0 0;">Motion</div><div style="left:493px;top:825px;width:347px;height:1px;background:#585858;"></div><div style="left:848px;top:825px;width:254px;height:1px;background:#585858;"></div><div style="left:1108px;top:825px;width:1521px;height:1px;background:#585858;"></div><div style="left:493px;top:825px;width:88px;height:27px;background:#666666;border:1px solid #555;border-top:none;border-radius:0 0 3px 3px"></div><div class="t" style="left:506.0px;top:832.70px;font-size:13px;line-height:13px;color:#1e1e1e;transform:scaleX(1.0461);transform-origin:0 0;">Properties</div><div style="left:582px;top:826px;width:112px;height:24px;background:#5d5d5d;border:1px solid #545454;border-top:none;border-radius:0 0 3px 3px"></div><div class="t" style="left:593.5px;top:831.70px;font-size:13px;line-height:13px;color:#1e1e1e;transform:scaleX(1.0436);transform-origin:0 0;">Clip Properties</div><div style="left:846px;top:826px;width:91px;height:24px;background:#5d5d5d;border:1px solid #545454;border-top:none;border-radius:0 0 3px 3px"></div><div class="t" style="left:858.0px;top:831.70px;font-size:13px;line-height:13px;color:#1e1e1e;transform:scaleX(1.0616);transform-origin:0 0;">Transitions</div><div style="left:938px;top:825px;width:63px;height:27px;background:#666666;border:1px solid #555;border-top:none;border-radius:0 0 3px 3px"></div><div class="t" style="left:949.5px;top:832.70px;font-size:13px;line-height:13px;color:#1e1e1e;transform:scaleX(1.0127);transform-origin:0 0;">Effects</div><div style="left:1108px;top:825px;width:101px;height:27px;background:#666666;border:1px solid #555;border-top:none;border-radius:0 0 3px 3px"></div><div class="t" style="left:1121.25px;top:832.70px;font-size:13px;line-height:13px;color:#1e1e1e;transform:scaleX(1.0739);transform-origin:0 0;">Clip Monitor</div><div style="left:1209px;top:826px;width:120px;height:24px;background:#5d5d5d;border:1px solid #545454;border-top:none;border-radius:0 0 3px 3px"></div><div class="t" style="left:1221.75px;top:831.70px;font-size:13px;line-height:13px;color:#1e1e1e;transform:scaleX(1.0808);transform-origin:0 0;">Project Monitor</div><div style="left:515px;top:847px;width:5px;height:1px;background:#1e1e1e;"></div><div style="left:593px;top:846px;width:8px;height:1px;background:#1e1e1e;"></div><div style="left:858px;top:846px;width:7px;height:1px;background:#1e1e1e;"></div><div style="left:1129px;top:847px;width:4px;height:1px;background:#1e1e1e;"></div><div style="left:1221px;top:845px;width:8px;height:1px;background:#1e1e1e;"></div><div style="left:1310px;top:856px;width:2px;height:1px;background:#a0a0a0;"></div><div style="left:1313px;top:856px;width:2px;height:1px;background:#a0a0a0;"></div><div style="left:1316px;top:856px;width:2px;height:1px;background:#a0a0a0;"></div><div style="left:1319px;top:856px;width:2px;height:1px;background:#a0a0a0;"></div><div style="left:1322px;top:856px;width:2px;height:1px;background:#a0a0a0;"></div><div style="left:1325px;top:856px;width:2px;height:1px;background:#a0a0a0;"></div><div style="left:1108px;top:78px;width:1521px;height:685px;background:#9a9a9a;"></div><div style="left:1260px;top:78px;width:1217px;height:685px;background:#000;"></div><div style="left:1260px;top:249px;width:1217px;height:1px;background:#dcd27a;"></div><div style="left:1260px;top:592px;width:1217px;height:1px;background:#5a5000;"></div><div style="left:1108px;top:732px;width:152px;height:31px;background:#d84040;"></div><div style="left:1260px;top:732px;width:56px;height:31px;background:#9a0000;"></div><div class="t" style="left:1117px;top:737.76px;font-size:18px;line-height:18px;color:#ffffff;transform:scaleX(1.0811);transform-origin:0 0;">In Point</div><div style="left:1108px;top:763px;width:1521px;height:13px;background:#6a6a6a;"></div><div style="left:1108px;top:776px;width:1521px;height:1px;background:#484848;"></div><div style="left:1129px;top:763px;width:1px;height:4px;background:#3a3a3a;"></div><div style="left:1149px;top:763px;width:1px;height:4px;background:#3a3a3a;"></div><div style="left:1170px;top:763px;width:1px;height:4px;background:#3a3a3a;"></div><div style="left:1190px;top:763px;width:1px;height:4px;background:#3a3a3a;"></div><div style="left:1211px;top:763px;width:1px;height:4px;background:#3a3a3a;"></div><div style="left:1231px;top:763px;width:1px;height:6px;background:#3a3a3a;"></div><div style="left:1252px;top:763px;width:1px;height:4px;background:#3a3a3a;"></div><div style="left:1272px;top:763px;width:1px;height:4px;background:#3a3a3a;"></div><div style="left:1293px;top:763px;width:1px;height:4px;background:#3a3a3a;"></div><div style="left:1314px;top:763px;width:1px;height:4px;background:#3a3a3a;"></div><div style="left:1334px;top:763px;width:1px;height:4px;background:#3a3a3a;"></div><div style="left:1355px;top:763px;width:1px;height:6px;background:#3a3a3a;"></div><div style="left:1375px;top:763px;width:1px;height:4px;background:#3a3a3a;"></div><div style="left:1396px;top:763px;width:1px;height:4px;background:#3a3a3a;"></div><div style="left:1416px;top:763px;width:1px;height:4px;background:#3a3a3a;"></div><div style="left:1437px;top:763px;width:1px;height:4px;background:#3a3a3a;"></div><div style="left:1457px;top:763px;width:1px;height:4px;background:#3a3a3a;"></div><div style="left:1478px;top:763px;width:1px;height:6px;background:#3a3a3a;"></div><div style="left:1498px;top:763px;width:1px;height:4px;background:#3a3a3a;"></div><div style="left:1519px;top:763px;width:1px;height:4px;background:#3a3a3a;"></div><div style="left:1540px;top:763px;width:1px;height:4px;background:#3a3a3a;"></div><div style="left:1560px;top:763px;width:1px;height:4px;background:#3a3a3a;"></div><div style="left:1581px;top:763px;width:1px;height:4px;background:#3a3a3a;"></div><div style="left:1601px;top:763px;width:1px;height:6px;background:#3a3a3a;"></div><div style="left:1622px;top:763px;width:1px;height:4px;background:#3a3a3a;"></div><div style="left:1642px;top:763px;width:1px;height:4px;background:#3a3a3a;"></div><div style="left:1663px;top:763px;width:1px;height:4px;background:#3a3a3a;"></div><div style="left:1683px;top:763px;width:1px;height:4px;background:#3a3a3a;"></div><div style="left:1704px;top:763px;width:1px;height:4px;background:#3a3a3a;"></div><div style="left:1724px;top:763px;width:1px;height:6px;background:#3a3a3a;"></div><div style="left:1745px;top:763px;width:1px;height:4px;background:#3a3a3a;"></div><div style="left:1766px;top:763px;width:1px;height:4px;background:#3a3a3a;"></div><div style="left:1786px;top:763px;width:1px;height:4px;background:#3a3a3a;"></div><div style="left:1807px;top:763px;width:1px;height:4px;background:#3a3a3a;"></div><div style="left:1827px;top:763px;width:1px;height:4px;background:#3a3a3a;"></div><div style="left:1848px;top:763px;width:1px;height:6px;background:#3a3a3a;"></div><div style="left:1868px;top:763px;width:1px;height:4px;background:#3a3a3a;"></div><div style="left:1889px;top:763px;width:1px;height:4px;background:#3a3a3a;"></div><div style="left:1909px;top:763px;width:1px;height:4px;background:#3a3a3a;"></div><div style="left:1930px;top:763px;width:1px;height:4px;background:#3a3a3a;"></div><div style="left:1951px;top:763px;width:1px;height:4px;background:#3a3a3a;"></div><div style="left:1971px;top:763px;width:1px;height:6px;background:#3a3a3a;"></div><div style="left:1992px;top:763px;width:1px;height:4px;background:#3a3a3a;"></div><div style="left:2012px;top:763px;width:1px;height:4px;background:#3a3a3a;"></div><div style="left:2033px;top:763px;width:1px;height:4px;background:#3a3a3a;"></div><div style="left:2053px;top:763px;width:1px;height:4px;background:#3a3a3a;"></div><div style="left:2074px;top:763px;width:1px;height:4px;background:#3a3a3a;"></div><div style="left:2094px;top:763px;width:1px;height:6px;background:#3a3a3a;"></div><div style="left:2115px;top:763px;width:1px;height:4px;background:#3a3a3a;"></div><div style="left:2136px;top:763px;width:1px;height:4px;background:#3a3a3a;"></div><div style="left:2156px;top:763px;width:1px;height:4px;background:#3a3a3a;"></div><div style="left:2177px;top:763px;width:1px;height:4px;background:#3a3a3a;"></div><div style="left:2197px;top:763px;width:1px;height:4px;background:#3a3a3a;"></div><div style="left:2218px;top:763px;width:1px;height:6px;background:#3a3a3a;"></div><div style="left:2238px;top:763px;width:1px;height:4px;background:#3a3a3a;"></div><div style="left:2259px;top:763px;width:1px;height:4px;background:#3a3a3a;"></div><div style="left:2279px;top:763px;width:1px;height:4px;background:#3a3a3a;"></div><div style="left:2300px;top:763px;width:1px;height:4px;background:#3a3a3a;"></div><div style="left:2320px;top:763px;width:1px;height:4px;background:#3a3a3a;"></div><div style="left:2341px;top:763px;width:1px;height:6px;background:#3a3a3a;"></div><div style="left:2362px;top:763px;width:1px;height:4px;background:#3a3a3a;"></div><div style="left:2382px;top:763px;width:1px;height:4px;background:#3a3a3a;"></div><div style="left:2403px;top:763px;width:1px;height:4px;background:#3a3a3a;"></div><div style="left:2423px;top:763px;width:1px;height:4px;background:#3a3a3a;"></div><div style="left:2444px;top:763px;width:1px;height:4px;background:#3a3a3a;"></div><div style="left:2464px;top:763px;width:1px;height:6px;background:#3a3a3a;"></div><div style="left:2485px;top:763px;width:1px;height:4px;background:#3a3a3a;"></div><div style="left:2505px;top:763px;width:1px;height:4px;background:#3a3a3a;"></div><div style="left:2526px;top:763px;width:1px;height:4px;background:#3a3a3a;"></div><div style="left:2546px;top:763px;width:1px;height:4px;background:#3a3a3a;"></div><div style="left:2567px;top:763px;width:1px;height:4px;background:#3a3a3a;"></div><div style="left:2588px;top:763px;width:1px;height:6px;background:#3a3a3a;"></div><div style="left:2608px;top:763px;width:1px;height:4px;background:#3a3a3a;"></div><div style="left:2629px;top:763px;width:1px;height:4px;background:#3a3a3a;"></div><svg style="left:1108px;top:769px;" width="8" height="8" viewBox="0 0 8 8"><path d="M0 0L7 7H0Z" fill="#e8e8e8"/></svg><div style="left:1108px;top:825px;width:1521px;height:0px;background:#000;"></div><svg style="left:1660px;top:794px;" width="20" height="20" viewBox="0 0 20 20"><path d="M2.5 0v13" stroke="#111" stroke-width="1.2"/><circle cx="2.5" cy="15.5" r="2.2" fill="none" stroke="#111" stroke-width="1.2"/><path d="M7 8.5h8M10 5.5l-3 3l3 3" fill="none" stroke="#111" stroke-width="1.2"/></svg><svg style="left:1691px;top:794px;" width="20" height="20" viewBox="0 0 20 20"><path d="M13.5 0v13" stroke="#111" stroke-width="1.2"/><circle cx="13.5" cy="15.5" r="2.2" fill="none" stroke="#111" stroke-width="1.2"/><path d="M1 8.5h8M6 5.5l3 3l-3 3" fill="none" stroke="#111" stroke-width="1.2"/></svg><svg style="left:1725px;top:795px;" width="18" height="18" viewBox="0 0 18 18"><circle cx="9" cy="9" r="7.8" fill="none" stroke="#111" stroke-width="1.2"/><path d="M8.8 6v6l-3.8-3zM12.6 6v6l-3.8-3z" fill="#111"/></svg><svg style="left:1758px;top:795px;" width="18" height="18" viewBox="0 0 18 18"><circle cx="9" cy="9" r="7.8" fill="none" stroke="#111" stroke-width="1.2"/><path d="M7.5 6v6l4.5-3z" fill="#111"/></svg><svg style="left:1784px;top:802px;" width="10" height="6" viewBox="0 0 10 6"><path d="M0.5 0.5h9l-4.5 4.5z" fill="#1e1e1e"/></svg><svg style="left:1803px;top:795px;" width="18" height="18" viewBox="0 0 18 18"><circle cx="9" cy="9" r="7.8" fill="none" stroke="#111" stroke-width="1.2"/><path d="M5.4 6v6l3.8-3zM9.2 6v6l3.8-3z" fill="#111"/></svg><svg style="left:1836px;top:795px;" width="18" height="18" viewBox="0 0 18 18"><path d="M0.5 6h3l4.5-4.5v15l-4.5-4.5h-3z" fill="#111"/><path d="M10.5 5.5a4 4 0 0 1 0 7" fill="none" stroke="#111" stroke-width="1.1"/><path d="M12.5 3.5a7 7 0 0 1 0 11" fill="none" stroke="#111" stroke-width="1.1"/></svg><svg style="left:1852px;top:813px;" width="7" height="5" viewBox="0 0 7 5"><path d="M0.5 0.5h6l-3 3z" fill="#1e1e1e"/></svg><div style="left:1862px;top:789px;width:32px;height:31px;background:#545454;border:1px solid #4a4a4a;border-radius:3px"></div><svg style="left:1869px;top:796px;" width="18" height="18" viewBox="0 0 18 18"><rect x="2.5" y="2.5" width="12" height="12" fill="none" stroke="#111" stroke-width="1.1" stroke-dasharray="2 1.5"/><g fill="#111"><rect x="0.5" y="0.5" width="3" height="3"/><rect x="13.5" y="0.5" width="3" height="3"/><rect x="0.5" y="13.5" width="3" height="3"/><rect x="13.5" y="13.5" width="3" height="3"/></g></svg><div style="left:1899px;top:795px;width:1px;height:18px;background:#5a5a5a;"></div><div class="t" style="left:1910px;top:799.54px;font-size:13px;line-height:13px;color:#e0e0e0;font-family:'Liberation Mono',monospace;transform:scaleX(0.9969);transform-origin:0 0;">00:00:00:00</div><div style="left:2000px;top:794px;width:1px;height:20px;background:#4a4a4a;"></div><svg style="left:2003px;top:796px;" width="9" height="17" viewBox="0 0 9 17"><path d="M0.5 5L4.25 0.8L8 5z" fill="#2a2a2a"/><path d="M0.5 10.5L4.25 14.8L8 10.5z" fill="#444"/></svg><svg style="left:2020px;top:797px;" width="23" height="20" viewBox="0 0 23 20"><rect x="0" y="0.5" width="18" height="2.2" fill="#111"/><rect x="0" y="5.5" width="18" height="2.2" fill="#111"/><rect x="0" y="10.5" width="18" height="2.2" fill="#111"/><path d="M16.5 16h5.5l-2.75 2.8z" fill="#222"/></svg><svg style="left:2053px;top:796px;" width="18" height="18" viewBox="0 0 18 18"><path d="M9 1v15M1.5 8.5h15" stroke="#111" stroke-width="1.2"/></svg><div style="left:2083px;top:795px;width:1px;height:18px;background:#5a5a5a;"></div><div style="left:2086px;top:789px;width:539px;height:9px;background:#3c423e;"></div><div style="left:2291px;top:789px;width:264px;height:9px;background:#3a473c;"></div><div style="left:2555px;top:789px;width:44px;height:9px;background:#44423a;"></div><div style="left:2599px;top:789px;width:26px;height:9px;background:#463a3a;"></div><div style="left:2150px;top:789px;width:1px;height:9px;background:rgba(0,0,0,0.12);"></div><div style="left:2214px;top:789px;width:1px;height:9px;background:rgba(0,0,0,0.12);"></div><div style="left:2291px;top:789px;width:1px;height:9px;background:rgba(0,0,0,0.12);"></div><div style="left:2343px;top:789px;width:1px;height:9px;background:rgba(0,0,0,0.12);"></div><div style="left:2409px;top:789px;width:1px;height:9px;background:rgba(0,0,0,0.12);"></div><div style="left:2493px;top:789px;width:1px;height:9px;background:rgba(0,0,0,0.12);"></div><div style="left:2555px;top:789px;width:1px;height:9px;background:rgba(0,0,0,0.12);"></div><div style="left:2599px;top:789px;width:1px;height:9px;background:rgba(0,0,0,0.12);"></div><div style="left:2086px;top:800px;width:539px;height:9px;background:#3c423e;"></div><div style="left:2291px;top:800px;width:264px;height:9px;background:#3a473c;"></div><div style="left:2555px;top:800px;width:44px;height:9px;background:#44423a;"></div><div style="left:2599px;top:800px;width:26px;height:9px;background:#463a3a;"></div><div style="left:2150px;top:800px;width:1px;height:9px;background:rgba(0,0,0,0.12);"></div><div style="left:2214px;top:800px;width:1px;height:9px;background:rgba(0,0,0,0.12);"></div><div style="left:2291px;top:800px;width:1px;height:9px;background:rgba(0,0,0,0.12);"></div><div style="left:2343px;top:800px;width:1px;height:9px;background:rgba(0,0,0,0.12);"></div><div style="left:2409px;top:800px;width:1px;height:9px;background:rgba(0,0,0,0.12);"></div><div style="left:2493px;top:800px;width:1px;height:9px;background:rgba(0,0,0,0.12);"></div><div style="left:2555px;top:800px;width:1px;height:9px;background:rgba(0,0,0,0.12);"></div><div style="left:2599px;top:800px;width:1px;height:9px;background:rgba(0,0,0,0.12);"></div><div style="left:2082px;top:795px;width:1px;height:20px;background:#6a6a6a;"></div><div class="t" style="left:2142.754375px;top:810.61px;font-size:10.5px;line-height:10.5px;color:#b8b8b8;">-45</div><div class="t" style="left:2206.754375px;top:810.61px;font-size:10.5px;line-height:10.5px;color:#b8b8b8;">-30</div><div class="t" style="left:2282.754375px;top:810.61px;font-size:10.5px;line-height:10.5px;color:#b8b8b8;">-20</div><div class="t" style="left:2335.754375px;top:810.61px;font-size:10.5px;line-height:10.5px;color:#b8b8b8;">-15</div><div class="t" style="left:2401.754375px;top:810.61px;font-size:10.5px;line-height:10.5px;color:#b8b8b8;">-10</div><div class="t" style="left:2488.2346875px;top:810.61px;font-size:10.5px;line-height:10.5px;color:#b8b8b8;">-5</div><div class="t" style="left:2549.7346875px;top:810.61px;font-size:10.5px;line-height:10.5px;color:#b8b8b8;">-2</div><div class="t" style="left:2595.5196875px;top:810.61px;font-size:10.5px;line-height:10.5px;color:#b8b8b8;">0</div><div style="left:10px;top:866px;width:123px;height:25px;background:linear-gradient(#646464,#5c5c5c);border:1px solid #505050;border-radius:3px"></div><svg style="left:16px;top:871px;" width="13" height="13" viewBox="0 0 13 13"><rect x="0.5" y="0.5" width="12" height="12" fill="none" stroke="#111"/><g fill="#111" opacity="0.75"><rect x="2" y="2" width="3" height="3"/><rect x="8" y="2" width="3" height="3"/><rect x="5" y="5" width="3" height="3"/><rect x="2" y="8" width="3" height="3"/><rect x="8" y="8" width="3" height="3"/></g></svg><div class="t" style="left:34.3px;top:872.00px;font-size:13px;line-height:13px;color:#efefef;transform:scaleX(1.0645);transform-origin:0 0;">High Quality</div><svg style="left:118px;top:876px;" width="9" height="6" viewBox="0 0 9 6"><path d="M0 0.5h8l-4 4z" fill="#222"/></svg><div style="left:135px;top:866px;width:146px;height:25px;background:linear-gradient(#646464,#5c5c5c);border:1px solid #505050;border-radius:3px"></div><div style="left:145px;top:872px;width:5px;height:5px;background:#5a8ae0;"></div><div style="left:142px;top:878px;width:12px;height:4px;background:#111;"></div><div class="t" style="left:159.4px;top:872.00px;font-size:13px;line-height:13px;color:#efefef;transform:scaleX(1.0686);transform-origin:0 0;">Normal mode</div><svg style="left:265px;top:876px;" width="9" height="6" viewBox="0 0 9 6"><path d="M0 0.5h8l-4 4z" fill="#222"/></svg><div style="left:285px;top:870px;width:1px;height:17px;background:#5a5a5a;"></div><div style="left:290px;top:864px;width:29px;height:29px;background:#555555;border:1px solid #4a4a4a;border-radius:3px"></div><svg style="left:297px;top:869px;" width="14" height="18" viewBox="0 0 14 18"><path d="M2 0.5v1" stroke="#111" stroke-width="1.2"/><path d="M3 3.5L12.5 10L7.5 10.8L5 16.5z" fill="#111"/></svg><svg style="left:326px;top:869px;" width="17" height="18" viewBox="0 0 17 18"><path d="M4 0.5L11 12M13 0.5L6 12" stroke="#111" stroke-width="1.2"/><circle cx="4.5" cy="14.5" r="2.3" fill="none" stroke="#111" stroke-width="1.2"/><circle cx="12.5" cy="14.5" r="2.3" fill="none" stroke="#111" stroke-width="1.2"/></svg><svg style="left:357px;top:874px;" width="18" height="9" viewBox="0 0 18 9"><rect x="0.5" y="0.5" width="3.5" height="7.5" fill="none" stroke="#111" stroke-width="1"/><rect x="13" y="0.5" width="3.5" height="7.5" fill="none" stroke="#111" stroke-width="1"/><path d="M5 4.25h7M6.5 3l-1.5 1.25 1.5 1.25M10.5 3l1.5 1.25-1.5 1.25" stroke="#111" stroke-width="0.9" fill="none"/></svg><div style="left:385px;top:870px;width:1px;height:17px;background:#5a5a5a;"></div><div class="t" style="left:401.7px;top:873.04px;font-size:13px;line-height:13px;color:#ececec;font-family:'Liberation Mono',monospace;transform:scaleX(0.9968);transform-origin:0 0;">00:07:03:09 / 00:15:05:28</div><svg style="left:601px;top:883px;" width="7" height="4" viewBox="0 0 7 4"><path d="M0 0h6.5l-3.25 3z" fill="#222"/></svg><div style="left:613px;top:870px;width:1px;height:17px;background:#5a5a5a;"></div><svg style="left:622px;top:871px;" width="20" height="14" viewBox="0 0 20 14"><path d="M7 0.5h6l-3 2.5z" fill="#5a8ae0"/><rect x="7" y="4.5" width="6" height="5.5" fill="#5a8ae0"/><rect x="0.5" y="7.5" width="4" height="3.5" fill="#111"/><path d="M13 8.5h3v-2.5l3.5 3.5-3.5 3.5v-2.5h-3z" fill="#111"/></svg><svg style="left:654px;top:871px;" width="18" height="13" viewBox="0 0 18 13"><path d="M6 0.5h6l-3 2.5z" fill="#5a8ae0"/><rect x="6" y="3.5" width="6" height="5.5" fill="#5a8ae0"/><rect x="0.5" y="8.5" width="16" height="3.5" fill="#111"/></svg><svg style="left:686px;top:876px;" width="17" height="10" viewBox="0 0 17 10"><rect x="0" y="2.5" width="4" height="4" fill="#111"/><path d="M6 1.5l4 5M10 1.5l-4 5" stroke="#e04050" stroke-width="1.2"/><path d="M16 2.5v4h-2.5v2.5l-3.5-4.5 3.5-4.5v2.5z" fill="#111"/></svg><svg style="left:717px;top:876px;" width="17" height="10" viewBox="0 0 17 10"><rect x="0" y="2.5" width="4" height="4" fill="#111"/><path d="M6.5 1.5l4 5M10.5 1.5l-4 5" stroke="#e04050" stroke-width="1.2"/><rect x="12.5" y="2" width="4" height="5" fill="#111"/></svg><div style="left:745px;top:870px;width:1px;height:17px;background:#5a5a5a;"></div><svg style="left:756px;top:870px;" width="16" height="16" viewBox="0 0 16 16"><path d="M8 0.5L10 6H15.5L11 9.5L12.8 15.2L8 11.8L3.2 15.2L5 9.5L0.5 6H6Z" fill="#111"/></svg><svg style="left:782px;top:886px;" width="8" height="4" viewBox="0 0 8 4"><path d="M0 0h7l-3.5 3z" fill="#222"/></svg><div style="left:793px;top:870px;width:1px;height:17px;background:#5a5a5a;"></div><svg style="left:802px;top:870px;" width="18" height="18" viewBox="0 0 18 18"><circle cx="9" cy="9" r="7.9" fill="none" stroke="#111" stroke-width="1.2"/><path d="M8 5v8a4 4 0 0 1 0-8z" fill="#e04050"/><path d="M8.5 5.5l4.5 3.5-4.5 3.5z" fill="#111"/></svg><svg style="left:827px;top:876px;" width="10" height="6" viewBox="0 0 10 6"><path d="M0 0.5h9l-4.5 4.5z" fill="#222"/></svg><div style="left:5px;top:897px;width:2624px;height:1px;background:#111;"></div><div style="left:5px;top:898px;width:2624px;height:1px;background:#5a5a5a;"></div><div style="left:5px;top:899px;width:2px;height:562px;background:#555;"></div><div style="left:7px;top:899px;width:150px;height:562px;background:#656565;"></div><div style="left:157px;top:899px;width:4px;height:562px;background:#5a5a5a;"></div><div style="left:7px;top:900px;width:154px;height:26px;background:#5a5a5a;"></div><svg style="left:31px;top:905px;" width="14" height="14" viewBox="0 0 14 14"><rect x="1" y="1" width="3.5" height="3.5" fill="none" stroke="#111" stroke-width="1.1"/><path d="M7 1.5h5.5v2.5M1.5 7v5.5h3" fill="none" stroke="#111" stroke-width="1.1"/><path d="M9.25 6.5v6.5M7 10.5l2.25 2.5 2.25-2.5" fill="none" stroke="#111" stroke-width="1.1"/></svg><svg style="left:74px;top:905px;" width="14" height="14" viewBox="0 0 14 14"><rect x="1" y="9" width="3.5" height="3.5" fill="none" stroke="#111" stroke-width="1.1"/><path d="M1.5 1h1.5M1.5 4v2M7 12.5h1.5M11.5 12.5h1v-1" fill="none" stroke="#111" stroke-width="1.1"/><path d="M9.25 7.5v-6.5M7 3.5l2.25-2.5 2.25 2.5" fill="none" stroke="#111" stroke-width="1.1"/></svg><svg style="left:117px;top:905px;" width="14" height="14" viewBox="0 0 14 14"><path d="M1 13L13 1" stroke="#111" stroke-width="1.1"/><g fill="#111" opacity="0.8"><rect x="2" y="3" width="4" height="2"/><rect x="8" y="4" width="4" height="2"/><rect x="2" y="8" width="3" height="3"/><rect x="9" y="8" width="3" height="4"/></g></svg><div style="left:161px;top:899px;width:2468px;height:27px;background:#6b6b6b;"></div><div class="t" style="left:163px;top:903.42px;font-size:12.5px;line-height:12.5px;color:#e2e2e2;transform:scaleX(1.1813);transform-origin:0 0;">00:00:00:00</div><div style="left:320px;top:916px;width:1px;height:10px;background:#333;"></div><div class="t" style="left:322px;top:903.42px;font-size:12.5px;line-height:12.5px;color:#e2e2e2;transform:scaleX(1.1813);transform-origin:0 0;">00:01:00:00</div><div style="left:480px;top:916px;width:1px;height:10px;background:#333;"></div><div class="t" style="left:482px;top:903.42px;font-size:12.5px;line-height:12.5px;color:#e2e2e2;transform:scaleX(1.1813);transform-origin:0 0;">00:02:00:00</div><div style="left:639px;top:916px;width:1px;height:10px;background:#333;"></div><div class="t" style="left:641px;top:903.42px;font-size:12.5px;line-height:12.5px;color:#e2e2e2;transform:scaleX(1.1813);transform-origin:0 0;">00:03:00:00</div><div style="left:799px;top:916px;width:1px;height:10px;background:#333;"></div><div class="t" style="left:801px;top:903.42px;font-size:12.5px;line-height:12.5px;color:#e2e2e2;transform:scaleX(1.1813);transform-origin:0 0;">00:04:00:00</div><div style="left:959px;top:916px;width:1px;height:10px;background:#333;"></div><div class="t" style="left:961px;top:903.42px;font-size:12.5px;line-height:12.5px;color:#e2e2e2;transform:scaleX(1.1813);transform-origin:0 0;">00:05:00:00</div><div style="left:1118px;top:916px;width:1px;height:10px;background:#333;"></div><div class="t" style="left:1120px;top:903.42px;font-size:12.5px;line-height:12.5px;color:#e2e2e2;transform:scaleX(1.1813);transform-origin:0 0;">00:06:00:00</div><div style="left:1278px;top:916px;width:1px;height:10px;background:#333;"></div><div class="t" style="left:1280px;top:903.42px;font-size:12.5px;line-height:12.5px;color:#e2e2e2;transform:scaleX(1.1813);transform-origin:0 0;">00:07:00:00</div><div style="left:1437px;top:916px;width:1px;height:10px;background:#333;"></div><div class="t" style="left:1439px;top:903.42px;font-size:12.5px;line-height:12.5px;color:#e2e2e2;transform:scaleX(1.1813);transform-origin:0 0;">00:08:00:00</div><div style="left:1597px;top:916px;width:1px;height:10px;background:#333;"></div><div class="t" style="left:1599px;top:903.42px;font-size:12.5px;line-height:12.5px;color:#e2e2e2;transform:scaleX(1.1813);transform-origin:0 0;">00:09:00:00</div><div style="left:1757px;top:916px;width:1px;height:10px;background:#333;"></div><div class="t" style="left:1759px;top:903.42px;font-size:12.5px;line-height:12.5px;color:#e2e2e2;transform:scaleX(1.1813);transform-origin:0 0;">00:10:00:00</div><div style="left:1916px;top:916px;width:1px;height:10px;background:#333;"></div><div class="t" style="left:1918px;top:903.42px;font-size:12.5px;line-height:12.5px;color:#e2e2e2;transform:scaleX(1.1980);transform-origin:0 0;">00:11:00:00</div><div style="left:2076px;top:916px;width:1px;height:10px;background:#333;"></div><div class="t" style="left:2078px;top:903.42px;font-size:12.5px;line-height:12.5px;color:#e2e2e2;transform:scaleX(1.1813);transform-origin:0 0;">00:12:00:00</div><div style="left:2235px;top:916px;width:1px;height:10px;background:#333;"></div><div class="t" style="left:2237px;top:903.42px;font-size:12.5px;line-height:12.5px;color:#e2e2e2;transform:scaleX(1.1813);transform-origin:0 0;">00:13:00:00</div><div style="left:2395px;top:916px;width:1px;height:10px;background:#333;"></div><div class="t" style="left:2397px;top:903.42px;font-size:12.5px;line-height:12.5px;color:#e2e2e2;transform:scaleX(1.1813);transform-origin:0 0;">00:14:00:00</div><div style="left:2555px;top:916px;width:1px;height:10px;background:#333;"></div><div style="left:2557px;top:899.42px;width:70px;height:20.5px;overflow:hidden"><div class="t" style="left:2557px;top:903.42px;font-size:12.5px;line-height:12.5px;color:#e2e2e2;transform:scaleX(1.1813);transform-origin:0 0;;left:0;top:4px">00:15:00:00</div></div><div style="left:161px;top:915px;width:9px;height:11px;background:#353535;"></div><div style="left:162px;top:916px;width:7px;height:1px;background:#6a80a8;"></div><div style="left:162px;top:924px;width:7px;height:1px;background:#6a80a8;"></div><div style="left:163px;top:918px;width:5px;height:5px;background:#cdd2dc;"></div><div style="left:7px;top:926px;width:150px;height:74px;background:#656565;"></div><div style="left:7px;top:1000px;width:150px;height:1px;background:#111;"></div><div style="left:161px;top:926px;width:2466px;height:74px;background:#404040;"></div><div style="left:161px;top:1000px;width:2466px;height:1px;background:#5c5c5c;"></div><svg style="left:8px;top:929px;" width="14" height="14" viewBox="0 0 14 14"><defs><radialGradient id="led" cx="0.48" cy="0.38" r="0.62"><stop offset="0" stop-color="#f4f4f4"/><stop offset="0.35" stop-color="#b4b4b4"/><stop offset="0.8" stop-color="#5a5a5a"/><stop offset="1" stop-color="#3a3a3a"/></radialGradient></defs><circle cx="7" cy="7" r="6.7" fill="url(#led)"/></svg><div class="t" style="left:25.1px;top:929.80px;font-size:13px;line-height:13px;color:#eeeeee;transform:scaleX(1.0350);transform-origin:0 0;">Video 3</div><svg style="left:19px;top:971px;" width="15" height="19" viewBox="0 0 15 19"><path d="M3.75 10v-5a3.75 3.75 0 0 1 7.5 0v1.5" fill="none" stroke="#111" stroke-width="1.3"/><rect x="0.75" y="10.25" width="13" height="7.75" fill="none" stroke="#111" stroke-width="1.5"/></svg><svg style="left:51px;top:971px;" width="19" height="19" viewBox="0 0 19 19"><rect x="0.5" y="6.5" width="2.5" height="6" fill="#111"/><path d="M3 6.5l7-6.3v18.6l-7-6.3z" fill="#111"/><path d="M11.5 5.5a5 5 0 0 1 0 8" fill="none" stroke="#111" stroke-width="1.2"/><path d="M13 2.5a9 9 0 0 1 0 14" fill="none" stroke="#111" stroke-width="1.2"/></svg><svg style="left:84px;top:971px;" width="18" height="18" viewBox="0 0 18 18"><rect x="0" y="0" width="18" height="18" fill="#111"/><rect x="3.5" y="1.5" width="11" height="6.5" fill="#666" class="fh"/><rect x="3.5" y="10" width="11" height="6.5" fill="#666" class="fh"/><g fill="#3a3a3a"><rect x="1.2" y="2" width="1.2" height="1.5"/><rect x="1.2" y="5.5" width="1.2" height="1.5"/><rect x="1.2" y="9" width="1.2" height="1.5"/><rect x="1.2" y="12.5" width="1.2" height="1.5"/><rect x="15.6" y="2" width="1.2" height="1.5"/><rect x="15.6" y="5.5" width="1.2" height="1.5"/><rect x="15.6" y="9" width="1.2" height="1.5"/><rect x="15.6" y="12.5" width="1.2" height="1.5"/></g></svg><div style="left:7px;top:1001px;width:150px;height:74px;background:#656565;"></div><div style="left:7px;top:1075px;width:150px;height:1px;background:#111;"></div><div style="left:161px;top:1001px;width:2466px;height:74px;background:#404040;"></div><div style="left:161px;top:1075px;width:2466px;height:1px;background:#5c5c5c;"></div><svg style="left:8px;top:1004px;" width="14" height="14" viewBox="0 0 14 14"><defs><radialGradient id="led" cx="0.48" cy="0.38" r="0.62"><stop offset="0" stop-color="#f4f4f4"/><stop offset="0.35" stop-color="#b4b4b4"/><stop offset="0.8" stop-color="#5a5a5a"/><stop offset="1" stop-color="#3a3a3a"/></radialGradient></defs><circle cx="7" cy="7" r="6.7" fill="url(#led)"/></svg><div class="t" style="left:25.1px;top:1004.80px;font-size:13px;line-height:13px;color:#eeeeee;transform:scaleX(1.0350);transform-origin:0 0;">Video 2</div><svg style="left:19px;top:1046px;" width="15" height="19" viewBox="0 0 15 19"><path d="M3.75 10v-5a3.75 3.75 0 0 1 7.5 0v1.5" fill="none" stroke="#111" stroke-width="1.3"/><rect x="0.75" y="10.25" width="13" height="7.75" fill="none" stroke="#111" stroke-width="1.5"/></svg><svg style="left:51px;top:1046px;" width="19" height="19" viewBox="0 0 19 19"><rect x="0.5" y="6.5" width="2.5" height="6" fill="#111"/><path d="M3 6.5l7-6.3v18.6l-7-6.3z" fill="#111"/><path d="M11.5 5.5a5 5 0 0 1 0 8" fill="none" stroke="#111" stroke-width="1.2"/><path d="M13 2.5a9 9 0 0 1 0 14" fill="none" stroke="#111" stroke-width="1.2"/></svg><svg style="left:84px;top:1046px;" width="18" height="18" viewBox="0 0 18 18"><rect x="0" y="0" width="18" height="18" fill="#111"/><rect x="3.5" y="1.5" width="11" height="6.5" fill="#666" class="fh"/><rect x="3.5" y="10" width="11" height="6.5" fill="#666" class="fh"/><g fill="#3a3a3a"><rect x="1.2" y="2" width="1.2" height="1.5"/><rect x="1.2" y="5.5" width="1.2" height="1.5"/><rect x="1.2" y="9" width="1.2" height="1.5"/><rect x="1.2" y="12.5" width="1.2" height="1.5"/><rect x="15.6" y="2" width="1.2" height="1.5"/><rect x="15.6" y="5.5" width="1.2" height="1.5"/><rect x="15.6" y="9" width="1.2" height="1.5"/><rect x="15.6" y="12.5" width="1.2" height="1.5"/></g></svg><div style="left:7px;top:1076px;width:150px;height:74px;background:#5b6b6f;"></div><div style="left:7px;top:1150px;width:150px;height:1px;background:#111;"></div><div style="left:161px;top:1076px;width:2466px;height:74px;background:#51595b;"></div><div style="left:161px;top:1150px;width:2466px;height:1px;background:#5c5c5c;"></div><svg style="left:8px;top:1079px;" width="14" height="14" viewBox="0 0 14 14"><defs><radialGradient id="led" cx="0.48" cy="0.38" r="0.62"><stop offset="0" stop-color="#f4f4f4"/><stop offset="0.35" stop-color="#b4b4b4"/><stop offset="0.8" stop-color="#5a5a5a"/><stop offset="1" stop-color="#3a3a3a"/></radialGradient></defs><circle cx="7" cy="7" r="6.7" fill="url(#led)"/></svg><div class="t" style="left:25.1px;top:1079.80px;font-size:13px;line-height:13px;color:#eeeeee;transform:scaleX(1.0350);transform-origin:0 0;">Video 1</div><svg style="left:19px;top:1121px;" width="15" height="19" viewBox="0 0 15 19"><path d="M3.75 10v-5a3.75 3.75 0 0 1 7.5 0v1.5" fill="none" stroke="#111" stroke-width="1.3"/><rect x="0.75" y="10.25" width="13" height="7.75" fill="none" stroke="#111" stroke-width="1.5"/></svg><svg style="left:51px;top:1121px;" width="19" height="19" viewBox="0 0 19 19"><rect x="0.5" y="6.5" width="2.5" height="6" fill="#111"/><path d="M3 6.5l7-6.3v18.6l-7-6.3z" fill="#111"/><path d="M11.5 5.5a5 5 0 0 1 0 8" fill="none" stroke="#111" stroke-width="1.2"/><path d="M13 2.5a9 9 0 0 1 0 14" fill="none" stroke="#111" stroke-width="1.2"/></svg><svg style="left:84px;top:1121px;" width="18" height="18" viewBox="0 0 18 18"><rect x="0" y="0" width="18" height="18" fill="#111"/><rect x="3.5" y="1.5" width="11" height="6.5" fill="#666" class="fh"/><rect x="3.5" y="10" width="11" height="6.5" fill="#666" class="fh"/><g fill="#3a3a3a"><rect x="1.2" y="2" width="1.2" height="1.5"/><rect x="1.2" y="5.5" width="1.2" height="1.5"/><rect x="1.2" y="9" width="1.2" height="1.5"/><rect x="1.2" y="12.5" width="1.2" height="1.5"/><rect x="15.6" y="2" width="1.2" height="1.5"/><rect x="15.6" y="5.5" width="1.2" height="1.5"/><rect x="15.6" y="9" width="1.2" height="1.5"/><rect x="15.6" y="12.5" width="1.2" height="1.5"/></g></svg><div style="left:7px;top:1151px;width:150px;height:74px;background:#737373;"></div><div style="left:7px;top:1225px;width:150px;height:1px;background:#111;"></div><div style="left:161px;top:1151px;width:2466px;height:74px;background:#444444;"></div><div style="left:161px;top:1225px;width:2466px;height:1px;background:#5c5c5c;"></div><svg style="left:8px;top:1154px;" width="14" height="14" viewBox="0 0 14 14"><defs><radialGradient id="led" cx="0.48" cy="0.38" r="0.62"><stop offset="0" stop-color="#f4f4f4"/><stop offset="0.35" stop-color="#b4b4b4"/><stop offset="0.8" stop-color="#5a5a5a"/><stop offset="1" stop-color="#3a3a3a"/></radialGradient></defs><circle cx="7" cy="7" r="6.7" fill="url(#led)"/></svg><div class="t" style="left:25.1px;top:1154.80px;font-size:13px;line-height:13px;color:#eeeeee;transform:scaleX(1.0350);transform-origin:0 0;">Audio 1</div><svg style="left:19px;top:1196px;" width="15" height="19" viewBox="0 0 15 19"><path d="M3.75 10v-5a3.75 3.75 0 0 1 7.5 0v1.5" fill="none" stroke="#111" stroke-width="1.3"/><rect x="0.75" y="10.25" width="13" height="7.75" fill="none" stroke="#111" stroke-width="1.5"/></svg><svg style="left:51px;top:1196px;" width="19" height="19" viewBox="0 0 19 19"><rect x="0.5" y="6.5" width="2.5" height="6" fill="#111"/><path d="M3 6.5l7-6.3v18.6l-7-6.3z" fill="#111"/><path d="M11.5 5.5a5 5 0 0 1 0 8" fill="none" stroke="#111" stroke-width="1.2"/><path d="M13 2.5a9 9 0 0 1 0 14" fill="none" stroke="#111" stroke-width="1.2"/></svg><div style="left:7px;top:1226px;width:150px;height:74px;background:#737373;"></div><div style="left:7px;top:1300px;width:150px;height:1px;background:#111;"></div><div style="left:161px;top:1226px;width:2466px;height:74px;background:#444444;"></div><div style="left:161px;top:1300px;width:2466px;height:1px;background:#5c5c5c;"></div><svg style="left:8px;top:1229px;" width="14" height="14" viewBox="0 0 14 14"><defs><radialGradient id="led" cx="0.48" cy="0.38" r="0.62"><stop offset="0" stop-color="#f4f4f4"/><stop offset="0.35" stop-color="#b4b4b4"/><stop offset="0.8" stop-color="#5a5a5a"/><stop offset="1" stop-color="#3a3a3a"/></radialGradient></defs><circle cx="7" cy="7" r="6.7" fill="url(#led)"/></svg><div class="t" style="left:25.1px;top:1229.80px;font-size:13px;line-height:13px;color:#eeeeee;transform:scaleX(1.0350);transform-origin:0 0;">Audio 2</div><svg style="left:19px;top:1271px;" width="15" height="19" viewBox="0 0 15 19"><path d="M3.75 10v-5a3.75 3.75 0 0 1 7.5 0v1.5" fill="none" stroke="#111" stroke-width="1.3"/><rect x="0.75" y="10.25" width="13" height="7.75" fill="none" stroke="#111" stroke-width="1.5"/></svg><svg style="left:51px;top:1271px;" width="19" height="19" viewBox="0 0 19 19"><rect x="0.5" y="6.5" width="2.5" height="6" fill="#111"/><path d="M3 6.5l7-6.3v18.6l-7-6.3z" fill="#111"/><path d="M11.5 5.5a5 5 0 0 1 0 8" fill="none" stroke="#111" stroke-width="1.2"/><path d="M13 2.5a9 9 0 0 1 0 14" fill="none" stroke="#111" stroke-width="1.2"/></svg><div style="left:7px;top:1301px;width:150px;height:160px;background:#656565;"></div><div style="left:159px;top:1174px;width:1px;height:2px;background:#9a9a9a;"></div><div style="left:159px;top:1177px;width:1px;height:2px;background:#9a9a9a;"></div><div style="left:159px;top:1180px;width:1px;height:2px;background:#9a9a9a;"></div><div style="left:159px;top:1183px;width:1px;height:2px;background:#9a9a9a;"></div><div style="left:159px;top:1186px;width:1px;height:2px;background:#9a9a9a;"></div><div style="left:159px;top:1189px;width:1px;height:2px;background:#9a9a9a;"></div><div style="left:161px;top:1301px;width:2466px;height:147px;background:#404040;"></div><div style="left:2627px;top:899px;width:2px;height:562px;background:#7a7a7a;"></div><div style="left:161px;top:1001px;width:25px;height:74px;background:#8ea6dc;border:1px solid #46526c"></div><div style="left:243px;top:1001px;width:2104px;height:74px;background:#8ea6dc;border:1px solid #46526c"></div><div style="left:244.0px;top:1002.0px;width:129.0px;height:72.0px;background:linear-gradient(#8c7c5a 0%,#b4a47a 20%,#d2c08e 40%,#c8a674 44%,#b08a5c 60%,#9a7850 80%,#6a5438 94%,#2e2a26 100%);"></div><div style="left:317.05px;top:1002.0px;width:55.95px;height:10.72px;background:linear-gradient(#6e5e44,#7e6c4e);"></div><div style="left:271.98px;top:1004.3px;width:44.3px;height:57.45px;background:#f8f8f8;"></div><div style="left:284.41px;top:1006.6px;width:31.08px;height:55.15px;background:#060606;"></div><div style="left:286.74px;top:1009.66px;width:9.33px;height:0.92px;background:#9a9a9a;opacity:0.5"></div><div style="left:286.74px;top:1015.33px;width:20.2px;height:0.92px;background:#9a9a9a;opacity:0.5"></div><div style="left:286.74px;top:1021.0px;width:10.88px;height:0.92px;background:#9a9a9a;opacity:0.5"></div><div style="left:286.74px;top:1026.66px;width:21.76px;height:0.92px;background:#9a9a9a;opacity:0.5"></div><div style="left:286.74px;top:1032.33px;width:12.43px;height:0.92px;background:#9a9a9a;opacity:0.5"></div><div style="left:286.74px;top:1038.0px;width:23.31px;height:0.92px;background:#9a9a9a;opacity:0.5"></div><div style="left:286.74px;top:1043.67px;width:13.99px;height:0.92px;background:#9a9a9a;opacity:0.5"></div><div style="left:286.74px;top:1049.34px;width:24.87px;height:0.92px;background:#9a9a9a;opacity:0.5"></div><div style="left:286.74px;top:1055.0px;width:15.54px;height:0.92px;background:#9a9a9a;opacity:0.5"></div><div style="left:317.51px;top:1012.72px;width:54.4px;height:47.49px;background:#eedc8e;"></div><div style="left:320.16px;top:1015.79px;width:12.43px;height:0.92px;background:#a89860;opacity:0.6"></div><div style="left:320.16px;top:1021.3px;width:29.53px;height:0.92px;background:#a89860;opacity:0.6"></div><div style="left:320.16px;top:1026.82px;width:15.54px;height:0.92px;background:#a89860;opacity:0.6"></div><div style="left:320.16px;top:1032.33px;width:32.64px;height:0.92px;background:#a89860;opacity:0.6"></div><div style="left:320.16px;top:1037.85px;width:18.65px;height:0.92px;background:#a89860;opacity:0.6"></div><div style="left:320.16px;top:1043.36px;width:35.75px;height:0.92px;background:#a89860;opacity:0.6"></div><div style="left:320.16px;top:1048.88px;width:21.76px;height:0.92px;background:#a89860;opacity:0.6"></div><div style="left:320.16px;top:1054.39px;width:38.86px;height:0.92px;background:#a89860;opacity:0.6"></div><div style="left:244.0px;top:1052.55px;width:29.22px;height:16.09px;background:#040404;"></div><div style="left:249.75px;top:1056.84px;width:19.12px;height:9.96px;background:#eeeef2;"></div><div style="left:275.08px;top:1063.28px;width:62.17px;height:7.66px;background:linear-gradient(#8a7048,#5a4830);"></div><div style="left:2218.0px;top:1002.0px;width:128.0px;height:72.0px;background:linear-gradient(#8c7c5a 0%,#b4a47a 20%,#d2c08e 40%,#c8a674 44%,#b08a5c 60%,#9a7850 80%,#6a5438 94%,#2e2a26 100%);"></div><div style="left:2290.48px;top:1002.0px;width:55.52px;height:10.72px;background:linear-gradient(#6e5e44,#7e6c4e);"></div><div style="left:2245.76px;top:1004.3px;width:43.95px;height:57.45px;background:#f8f8f8;"></div><div style="left:2258.1px;top:1006.6px;width:30.84px;height:55.15px;background:#060606;"></div><div style="left:2260.41px;top:1009.66px;width:9.25px;height:0.92px;background:#9a9a9a;opacity:0.5"></div><div style="left:2260.41px;top:1015.33px;width:20.05px;height:0.92px;background:#9a9a9a;opacity:0.5"></div><div style="left:2260.41px;top:1021.0px;width:10.8px;height:0.92px;background:#9a9a9a;opacity:0.5"></div><div style="left:2260.41px;top:1026.66px;width:21.59px;height:0.92px;background:#9a9a9a;opacity:0.5"></div><div style="left:2260.41px;top:1032.33px;width:12.34px;height:0.92px;background:#9a9a9a;opacity:0.5"></div><div style="left:2260.41px;top:1038.0px;width:23.13px;height:0.92px;background:#9a9a9a;opacity:0.5"></div><div style="left:2260.41px;top:1043.67px;width:13.88px;height:0.92px;background:#9a9a9a;opacity:0.5"></div><div style="left:2260.41px;top:1049.34px;width:24.67px;height:0.92px;background:#9a9a9a;opacity:0.5"></div><div style="left:2260.41px;top:1055.0px;width:15.42px;height:0.92px;background:#9a9a9a;opacity:0.5"></div><div style="left:2290.94px;top:1012.72px;width:53.98px;height:47.49px;background:#eedc8e;"></div><div style="left:2293.57px;top:1015.79px;width:12.34px;height:0.92px;background:#a89860;opacity:0.6"></div><div style="left:2293.57px;top:1021.3px;width:29.3px;height:0.92px;background:#a89860;opacity:0.6"></div><div style="left:2293.57px;top:1026.82px;width:15.42px;height:0.92px;background:#a89860;opacity:0.6"></div><div style="left:2293.57px;top:1032.33px;width:32.39px;height:0.92px;background:#a89860;opacity:0.6"></div><div style="left:2293.57px;top:1037.85px;width:18.51px;height:0.92px;background:#a89860;opacity:0.6"></div><div style="left:2293.57px;top:1043.36px;width:35.47px;height:0.92px;background:#a89860;opacity:0.6"></div><div style="left:2293.57px;top:1048.88px;width:21.59px;height:0.92px;background:#a89860;opacity:0.6"></div><div style="left:2293.57px;top:1054.39px;width:38.55px;height:0.92px;background:#a89860;opacity:0.6"></div><div style="left:2218.0px;top:1052.55px;width:28.99px;height:16.09px;background:#040404;"></div><div style="left:2223.71px;top:1056.84px;width:18.97px;height:9.96px;background:#eeeef2;"></div><div style="left:2248.84px;top:1063.28px;width:61.69px;height:7.66px;background:linear-gradient(#8a7048,#5a4830);"></div><div style="left:244px;top:1003px;width:39px;height:16px;background:#646464;"></div><div class="t" style="left:245px;top:1005.00px;font-size:13px;line-height:13px;color:#e6e6e6;transform:scaleX(0.9838);transform-origin:0 0;">Speed</div><div style="left:2064px;top:1003px;width:283px;height:17px;background:rgba(70,70,80,0.62);"></div><div class="t" style="left:2065px;top:1005.50px;font-size:13px;line-height:13px;color:#e6e6e6;transform:scaleX(1.0140);transform-origin:0 0;">vokoscreen-2019-01-20_20-57-00.mkv - 2000%</div><div style="left:186px;top:1076px;width:56px;height:74px;background:#8ea6dc;border:1px solid #46526c"></div><div style="left:189px;top:1078px;width:52px;height:17px;background:rgba(70,70,80,0.62);"></div><div class="t" style="left:191px;top:1080.00px;font-size:13px;line-height:13px;color:#e6e6e6;transform:scaleX(1.0275);transform-origin:0 0;">Title clip</div><div style="left:205px;top:1100px;width:36px;height:1px;background:repeating-linear-gradient(90deg,rgba(235,180,210,0.6) 0 1.5px,transparent 1.5px 2.5px);"></div><div style="left:188px;top:1103px;width:53px;height:1px;background:repeating-linear-gradient(90deg,rgba(235,180,210,0.6) 0 1.5px,transparent 1.5px 2.5px);"></div><div style="left:188px;top:1106px;width:53px;height:1px;background:repeating-linear-gradient(90deg,rgba(235,180,210,0.6) 0 1.5px,transparent 1.5px 2.5px);"></div><div style="left:188px;top:1109px;width:53px;height:1px;background:repeating-linear-gradient(90deg,rgba(235,180,210,0.6) 0 1.5px,transparent 1.5px 2.5px);"></div><div style="left:188px;top:1114px;width:53px;height:1px;background:repeating-linear-gradient(90deg,rgba(235,180,210,0.6) 0 1.5px,transparent 1.5px 2.5px);"></div><div style="left:205px;top:1117px;width:36px;height:1px;background:repeating-linear-gradient(90deg,rgba(235,180,210,0.6) 0 1.5px,transparent 1.5px 2.5px);"></div><svg style="left:161px;top:1152px;shape-rendering:crispEdges" width="819" height="72" viewBox="0 0 819 72"><rect x="0" y="0" width="819" height="72" fill="#8cd8a4"/><path d="M6.5 72V53.9M7.5 72V53.1M8.5 72V53.4M9.5 72V56.6M10.5 72V52.5M11.5 72V19.7M12.5 72V55.6M13.5 72V32.4M14.5 72V55.4M15.5 72V53.3M16.5 72V60.8M17.5 72V60.8M18.5 72V56.7M19.5 72V55.8M20.5 72V52.3M21.5 72V55.4M22.5 72V54.3M23.5 72V55.8M24.5 72V53.6M25.5 72V52.7M26.5 72V55.1M27.5 72V27.7M28.5 72V11.2M29.5 72V55.2M30.5 72V53.0M31.5 72V55.3M32.5 72V0.8M33.5 72V56.6M34.5 72V7.2M35.5 72V55.1M36.5 72V34.6M37.5 72V52.4M38.5 72V53.3M39.5 72V52.5M40.5 72V55.1M41.5 72V8.6M42.5 72V53.1M43.5 72V56.5M44.5 72V56.3M45.5 72V54.0M46.5 72V55.2M47.5 72V54.2M48.5 72V55.3M49.5 72V56.3M50.5 72V53.6M51.5 72V0.4M52.5 72V54.3M53.5 72V55.6M54.5 72V53.0M55.5 72V2.8M56.5 72V56.6M57.5 72V60.8M58.5 72V53.4M59.5 72V53.9M60.5 72V56.2M61.5 72V56.0M62.5 72V55.4M63.5 72V52.2M64.5 72V52.3M65.5 72V54.5M66.5 72V54.5M67.5 72V54.9M68.5 72V55.0M69.5 72V52.4M70.5 72V54.5M71.5 72V56.3M72.5 72V53.2M73.5 72V55.1M74.5 72V53.2M75.5 72V53.7M76.5 72V55.1M77.5 72V55.4M78.5 72V53.2M79.5 72V55.4M80.5 72V53.8M81.5 72V56.6M82.5 72V55.6M83.5 72V54.6M84.5 72V53.8M85.5 72V55.1M86.5 72V53.4M87.5 72V55.1M88.5 72V52.8M89.5 72V52.3M90.5 72V54.4M91.5 72V56.0M92.5 72V52.5M93.5 72V53.6M94.5 72V53.4M95.5 72V53.2M96.5 72V53.7M97.5 72V53.9M98.5 72V53.8M99.5 72V56.6M100.5 72V54.7M101.5 72V55.7M102.5 72V19.6M103.5 72V37.9M104.5 72V55.3M105.5 72V19.9M106.5 72V55.0M107.5 72V54.0M108.5 72V22.6M109.5 72V55.4M110.5 72V56.2M111.5 72V13.7M112.5 72V56.3M113.5 72V55.2M114.5 72V52.4M115.5 72V54.8M116.5 72V53.8M117.5 72V56.1M118.5 72V54.2M119.5 72V52.3M120.5 72V55.1M121.5 72V15.6M122.5 72V53.9M123.5 72V53.9M124.5 72V55.0M125.5 72V55.7M126.5 72V52.3M127.5 72V52.4M128.5 72V54.0M129.5 72V52.3M130.5 72V54.8M131.5 72V52.3M132.5 72V55.4M133.5 72V56.2M134.5 72V54.7M135.5 72V53.2M136.5 72V56.6M137.5 72V55.5M138.5 72V53.2M139.5 72V55.5M140.5 72V52.3M141.5 72V54.0M142.5 72V53.8M143.5 72V8.2M144.5 72V55.3M145.5 72V55.2M146.5 72V54.3M147.5 72V55.1M148.5 72V30.4M149.5 72V54.6M150.5 72V52.7M151.5 72V56.6M152.5 72V54.8M153.5 72V53.5M154.5 72V54.5M155.5 72V3.4M156.5 72V4.0M157.5 72V42.5M158.5 72V20.1M159.5 72V36.7M160.5 72V51.1M161.5 72V51.1M162.5 72V10.5M163.5 72V22.4M164.5 72V36.2M165.5 72V6.7M166.5 72V34.9M167.5 72V3.7M168.5 72V41.5M169.5 72V35.6M170.5 72V1.9M171.5 72V43.0M172.5 72V9.9M173.5 72V17.8M174.5 72V11.6M175.5 72V40.4M176.5 72V21.0M177.5 72V53.7M178.5 72V35.4M179.5 72V10.4M180.5 72V44.1M181.5 72V43.8M182.5 72V45.7M183.5 72V45.5M184.5 72V24.7M185.5 72V43.7M186.5 72V44.5M187.5 72V8.7M188.5 72V10.6M189.5 72V41.5M190.5 72V4.8M191.5 72V41.6M192.5 72V1.0M193.5 72V25.2M194.5 72V30.4M195.5 72V8.2M196.5 72V15.8M197.5 72V14.1M198.5 72V36.8M199.5 72V31.6M200.5 72V33.7M201.5 72V32.9M202.5 72V32.6M203.5 72V28.3M204.5 72V2.2M205.5 72V34.1M206.5 72V47.9M207.5 72V30.6M208.5 72V48.1M209.5 72V22.4M210.5 72V2.5M211.5 72V17.9M212.5 72V19.2M213.5 72V1.5M214.5 72V34.8M215.5 72V31.4M216.5 72V33.2M217.5 72V36.5M218.5 72V34.6M219.5 72V19.4M220.5 72V24.5M221.5 72V33.4M222.5 72V11.6M223.5 72V35.2M224.5 72V18.7M225.5 72V32.5M226.5 72V0.5M227.5 72V4.8M228.5 72V10.8M229.5 72V50.2M230.5 72V30.1M231.5 72V51.4M232.5 72V22.7M233.5 72V33.1M234.5 72V21.1M235.5 72V0.7M236.5 72V53.7M237.5 72V44.3M238.5 72V31.7M239.5 72V43.4M240.5 72V42.9M241.5 72V13.2M242.5 72V43.1M243.5 72V43.5M244.5 72V40.4M245.5 72V4.4M246.5 72V20.3M247.5 72V44.1M248.5 72V27.9M249.5 72V30.3M250.5 72V40.4M251.5 72V7.5M252.5 72V20.5M253.5 72V15.7M254.5 72V41.2M255.5 72V39.2M256.5 72V38.5M257.5 72V4.5M258.5 72V38.7M259.5 72V38.2M260.5 72V41.9M261.5 72V31.4M262.5 72V8.1M263.5 72V5.7M264.5 72V31.6M265.5 72V3.2M266.5 72V33.5M267.5 72V16.3M268.5 72V9.6M269.5 72V31.9M270.5 72V38.0M271.5 72V36.5M272.5 72V33.0M273.5 72V15.3M274.5 72V46.0M275.5 72V4.3M276.5 72V25.6M277.5 72V25.0M278.5 72V34.3M279.5 72V0.4M280.5 72V35.5M281.5 72V31.1M282.5 72V16.3M283.5 72V35.2M284.5 72V34.2M285.5 72V18.4M286.5 72V29.6M287.5 72V31.6M288.5 72V3.6M289.5 72V23.1M290.5 72V40.3M291.5 72V4.6M292.5 72V38.9M293.5 72V34.3M294.5 72V34.4M295.5 72V37.6M296.5 72V18.3M297.5 72V16.1M298.5 72V37.8M299.5 72V38.5M300.5 72V34.8M301.5 72V35.9M302.5 72V37.5M303.5 72V39.2M304.5 72V36.8M305.5 72V29.2M306.5 72V40.5M307.5 72V37.8M308.5 72V42.1M309.5 72V43.0M310.5 72V45.2M311.5 72V41.3M312.5 72V40.3M313.5 72V41.3M314.5 72V14.2M315.5 72V0.7M316.5 72V42.6M317.5 72V9.9M318.5 72V41.7M319.5 72V32.0M320.5 72V42.3M321.5 72V2.9M322.5 72V22.8M323.5 72V40.6M324.5 72V43.4M325.5 72V31.6M326.5 72V38.3M327.5 72V34.7M328.5 72V11.5M329.5 72V19.0M330.5 72V34.8M331.5 72V24.9M332.5 72V34.3M333.5 72V9.0M334.5 72V33.0M335.5 72V11.8M336.5 72V31.1M337.5 72V36.2M338.5 72V33.2M339.5 72V37.3M340.5 72V48.4M341.5 72V22.8M342.5 72V8.6M343.5 72V38.7M344.5 72V32.6M345.5 72V31.8M346.5 72V30.3M347.5 72V32.9M348.5 72V26.4M349.5 72V12.1M350.5 72V31.1M351.5 72V9.6M352.5 72V8.3M353.5 72V33.0M354.5 72V31.5M355.5 72V4.6M356.5 72V21.9M357.5 72V5.1M358.5 72V16.1M359.5 72V32.2M360.5 72V29.9M361.5 72V3.1M362.5 72V13.5M363.5 72V37.7M364.5 72V26.6M365.5 72V37.3M366.5 72V1.5M367.5 72V4.5M368.5 72V44.0M369.5 72V22.5M370.5 72V13.3M371.5 72V0.6M372.5 72V53.2M373.5 72V1.1M374.5 72V53.4M375.5 72V5.9M376.5 72V43.2M377.5 72V39.4M378.5 72V37.0M379.5 72V3.2M380.5 72V39.0M381.5 72V42.1M382.5 72V38.8M383.5 72V43.4M384.5 72V41.0M385.5 72V16.0M386.5 72V51.8M387.5 72V42.0M388.5 72V14.8M389.5 72V2.5M390.5 72V36.3M391.5 72V38.3M392.5 72V23.3M393.5 72V38.0M394.5 72V16.2M395.5 72V43.2M396.5 72V42.3M397.5 72V52.3M398.5 72V36.9M399.5 72V9.2M400.5 72V13.9M401.5 72V38.3M402.5 72V40.4M403.5 72V39.4M404.5 72V12.6M405.5 72V5.0M406.5 72V48.1M407.5 72V32.5M408.5 72V47.0M409.5 72V14.6M410.5 72V11.6M411.5 72V29.3M412.5 72V32.0M413.5 72V28.2M414.5 72V25.7M415.5 72V1.2M416.5 72V5.0M417.5 72V1.4M418.5 72V33.9M419.5 72V14.6M420.5 72V33.0M421.5 72V47.5M422.5 72V15.7M423.5 72V38.1M424.5 72V4.6M425.5 72V3.7M426.5 72V8.5M427.5 72V2.7M428.5 72V36.8M429.5 72V29.4M430.5 72V34.1M431.5 72V3.9M432.5 72V36.2M433.5 72V40.3M434.5 72V39.6M435.5 72V35.1M436.5 72V38.8M437.5 72V7.2M438.5 72V13.3M439.5 72V35.7M440.5 72V8.5M441.5 72V5.8M442.5 72V37.2M443.5 72V51.4M444.5 72V51.9M445.5 72V22.2M446.5 72V31.5M447.5 72V16.8M448.5 72V42.4M449.5 72V15.0M450.5 72V12.4M451.5 72V24.0M452.5 72V44.9M453.5 72V42.0M454.5 72V6.0M455.5 72V32.2M456.5 72V2.9M457.5 72V45.0M458.5 72V41.5M459.5 72V44.8M460.5 72V9.7M461.5 72V37.4M462.5 72V43.1M463.5 72V39.6M464.5 72V15.4M465.5 72V29.4M466.5 72V2.9M467.5 72V22.8M468.5 72V32.0M469.5 72V49.0M470.5 72V20.6M471.5 72V40.2M472.5 72V11.6M473.5 72V31.9M474.5 72V5.1M475.5 72V39.5M476.5 72V39.8M477.5 72V19.0M478.5 72V35.4M479.5 72V11.4M480.5 72V8.2M481.5 72V4.0M482.5 72V27.8M483.5 72V47.9M484.5 72V34.1M485.5 72V47.2M486.5 72V34.6M487.5 72V46.5M488.5 72V28.7M489.5 72V5.9M490.5 72V0.0M491.5 72V22.6M492.5 72V31.2M493.5 72V5.7M494.5 72V35.2M495.5 72V25.3M496.5 72V4.6M497.5 72V34.6M498.5 72V47.7M499.5 72V31.1M500.5 72V2.6M501.5 72V14.6M502.5 72V8.2M503.5 72V36.2M504.5 72V43.4M505.5 72V41.5M506.5 72V4.0M507.5 72V6.9M508.5 72V41.3M509.5 72V40.7M510.5 72V52.7M511.5 72V45.5M512.5 72V39.4M513.5 72V44.9M514.5 72V24.9M515.5 72V37.1M516.5 72V42.8M517.5 72V9.2M518.5 72V37.1M519.5 72V39.1M520.5 72V51.9M521.5 72V6.7M522.5 72V41.6M523.5 72V8.1M524.5 72V4.0M525.5 72V37.4M526.5 72V15.3M527.5 72V42.5M528.5 72V42.5M529.5 72V46.1M530.5 72V40.6M531.5 72V40.0M532.5 72V40.8M533.5 72V2.9M534.5 72V32.9M535.5 72V18.2M536.5 72V38.4M537.5 72V6.7M538.5 72V1.1M539.5 72V34.5M540.5 72V13.7M541.5 72V13.2M542.5 72V32.4M543.5 72V30.6M544.5 72V30.7M545.5 72V28.4M546.5 72V32.9M547.5 72V29.9M548.5 72V19.1M549.5 72V6.2M550.5 72V9.5M551.5 72V22.9M552.5 72V21.0M553.5 72V21.0M554.5 72V29.9M555.5 72V32.3M556.5 72V1.5M557.5 72V31.1M558.5 72V38.4M559.5 72V48.1M560.5 72V48.3M561.5 72V31.0M562.5 72V13.7M563.5 72V35.7M564.5 72V3.9M565.5 72V39.1M566.5 72V37.6M567.5 72V5.8M568.5 72V3.0M569.5 72V7.0M570.5 72V48.2M571.5 72V38.7M572.5 72V30.9M573.5 72V48.6M574.5 72V23.5M575.5 72V28.0M576.5 72V18.8M577.5 72V1.5M578.5 72V17.6M579.5 72V18.1M580.5 72V42.4M581.5 72V3.4M582.5 72V43.1M583.5 72V42.9M584.5 72V22.5M585.5 72V45.5M586.5 72V14.6M587.5 72V44.5M588.5 72V47.0M589.5 72V46.0M590.5 72V18.0M591.5 72V44.3M592.5 72V47.6M593.5 72V17.7M594.5 72V33.9M595.5 72V45.1M596.5 72V11.3M597.5 72V48.1M598.5 72V49.7M599.5 72V48.9M600.5 72V45.5M601.5 72V44.4M602.5 72V46.0M603.5 72V48.8M604.5 72V47.9M605.5 72V49.2M606.5 72V47.6M607.5 72V43.9M608.5 72V47.4M609.5 72V7.4M610.5 72V45.3M611.5 72V19.0M612.5 72V43.9M613.5 72V48.3M614.5 72V47.1M615.5 72V55.9M616.5 72V49.7M617.5 72V15.7M618.5 72V46.2M619.5 72V44.1M620.5 72V48.0M621.5 72V1.8M622.5 72V49.7M623.5 72V48.2M624.5 72V0.3M625.5 72V17.3M626.5 72V29.0M627.5 72V43.6M628.5 72V33.8M629.5 72V43.5M630.5 72V26.2M631.5 72V19.8M632.5 72V19.9M633.5 72V46.9M634.5 72V3.0M635.5 72V30.8M636.5 72V32.9M637.5 72V10.0M638.5 72V19.9M639.5 72V28.7M640.5 72V1.0M641.5 72V39.1M642.5 72V37.4M643.5 72V19.4M644.5 72V39.0M645.5 72V26.8M646.5 72V44.3M647.5 72V20.2M648.5 72V8.6M649.5 72V6.7M650.5 72V42.4M651.5 72V43.0M652.5 72V38.1M653.5 72V39.9M654.5 72V38.7M655.5 72V14.4M656.5 72V6.5M657.5 72V51.9M658.5 72V40.6M659.5 72V42.8M660.5 72V40.8M661.5 72V15.0M662.5 72V41.8M663.5 72V12.4M664.5 72V1.8M665.5 72V53.8M666.5 72V23.3M667.5 72V2.4M668.5 72V8.4M669.5 72V24.8M670.5 72V44.2M671.5 72V14.7M672.5 72V8.7M673.5 72V51.9M674.5 72V39.2M675.5 72V34.6M676.5 72V50.1M677.5 72V7.3M678.5 72V36.8M679.5 72V33.7M680.5 72V29.8M681.5 72V31.3M682.5 72V35.5M683.5 72V4.9M684.5 72V46.7M685.5 72V31.9M686.5 72V46.6M687.5 72V9.0M688.5 72V5.8M689.5 72V4.5M690.5 72V31.6M691.5 72V30.6M692.5 72V47.7M693.5 72V32.9M694.5 72V29.8M695.5 72V13.4M696.5 72V30.5M697.5 72V4.9M698.5 72V34.1M699.5 72V33.0M700.5 72V32.0M701.5 72V47.8M702.5 72V32.2M703.5 72V38.0M704.5 72V47.4M705.5 72V1.4M706.5 72V3.8M707.5 72V36.0M708.5 72V33.0M709.5 72V18.4M710.5 72V24.2M711.5 72V5.0M712.5 72V19.8M713.5 72V38.6M714.5 72V11.8M715.5 72V5.1M716.5 72V5.7M717.5 72V40.1M718.5 72V42.8M719.5 72V45.7M720.5 72V23.4M721.5 72V39.9M722.5 72V42.2M723.5 72V16.0M724.5 72V41.4M725.5 72V46.7M726.5 72V33.6M727.5 72V44.3M728.5 72V1.3M729.5 72V5.9M730.5 72V30.9M731.5 72V43.8M732.5 72V40.2M733.5 72V39.2M734.5 72V26.8M735.5 72V16.2M736.5 72V43.4M737.5 72V19.1M738.5 72V3.5M739.5 72V29.2M740.5 72V35.3M741.5 72V40.5M742.5 72V42.6M743.5 72V35.1M744.5 72V3.9M745.5 72V22.1M746.5 72V42.5M747.5 72V2.4M748.5 72V50.7M749.5 72V1.2M750.5 72V50.2M751.5 72V0.4M752.5 72V38.2M753.5 72V32.8M754.5 72V18.3M755.5 72V32.8M756.5 72V15.3M757.5 72V18.8M758.5 72V17.0M759.5 72V32.3M760.5 72V29.8M761.5 72V2.2M762.5 72V4.8M763.5 72V27.2M764.5 72V30.3M765.5 72V17.4M766.5 72V0.9M767.5 72V12.4M768.5 72V34.0M769.5 72V2.2M770.5 72V12.0M771.5 72V36.7M772.5 72V17.3M773.5 72V48.8M774.5 72V36.4M775.5 72V40.6M776.5 72V41.8M777.5 72V39.0M778.5 72V42.5M779.5 72V42.6M780.5 72V45.6M781.5 72V49.1M782.5 72V47.9M783.5 72V10.0M784.5 72V49.4M785.5 72V48.4M786.5 72V49.1M787.5 72V48.5M788.5 72V51.5M789.5 72V53.8M790.5 72V53.1M791.5 72V56.1M792.5 72V56.2M793.5 72V55.1M794.5 72V57.8M795.5 72V55.9M796.5 72V58.5M797.5 72V58.7M798.5 72V61.2M799.5 72V60.4M800.5 72V60.1M801.5 72V61.2M802.5 72V62.8M803.5 72V63.6M804.5 72V63.7M805.5 72V65.6M806.5 72V65.5M807.5 72V66.1M808.5 72V66.7M809.5 72V67.8M810.5 72V68.1M811.5 72V68.3M812.5 72V68.9M813.5 72V69.9M814.5 72V70.3M815.5 72V70.5M816.5 72V71.2M817.5 72V71.4M818.5 72V71.7" stroke="#5b6a9e" stroke-width="1" fill="none"/><path d="M0 45.5H819V72H0Z" fill="rgba(255,255,255,0.32)"/><path d="M0 45.5H819" fill="none" stroke="#f4f4f4" stroke-width="1.2"/></svg><div style="left:161px;top:1151px;width:819px;height:1px;background:#4a7a5a;"></div><div style="left:161px;top:1224px;width:819px;height:1px;background:#4a7a5a;"></div><div style="left:161px;top:1151px;width:1px;height:74px;background:#4a7a5a;"></div><div style="left:979px;top:1151px;width:1px;height:74px;background:#4a7a5a;"></div><div style="left:162px;top:1152px;width:136px;height:17px;background:#646464;"></div><div class="t" style="left:162.8px;top:1155.10px;font-size:13px;line-height:13px;color:#e8e8e8;transform:scaleX(1.0453);transform-origin:0 0;">Volume (keyframable)</div><div style="left:751px;top:1152px;width:228px;height:17px;background:rgba(60,60,60,0.55);"></div><div class="t" style="left:752px;top:1154.70px;font-size:13px;line-height:13px;color:#e0e0e0;transform:scaleX(1.0435);transform-origin:0 0;">01 - zero-project - The eighth sin.mp3</div><svg style="left:975px;top:1227px;shape-rendering:crispEdges" width="818" height="72" viewBox="0 0 818 72"><rect x="0" y="0" width="818" height="72" fill="#8cd8a4"/><path d="M6.5 72V53.9M7.5 72V53.1M8.5 72V53.4M9.5 72V56.6M10.5 72V52.5M11.5 72V19.7M12.5 72V55.6M13.5 72V32.4M14.5 72V55.4M15.5 72V53.3M16.5 72V60.8M17.5 72V60.8M18.5 72V56.7M19.5 72V55.8M20.5 72V52.3M21.5 72V55.4M22.5 72V54.3M23.5 72V55.8M24.5 72V53.6M25.5 72V52.7M26.5 72V55.1M27.5 72V27.7M28.5 72V11.2M29.5 72V55.2M30.5 72V53.0M31.5 72V55.3M32.5 72V0.8M33.5 72V56.6M34.5 72V7.2M35.5 72V55.1M36.5 72V34.6M37.5 72V52.4M38.5 72V53.3M39.5 72V52.5M40.5 72V55.1M41.5 72V8.6M42.5 72V53.1M43.5 72V56.5M44.5 72V56.3M45.5 72V54.0M46.5 72V55.2M47.5 72V54.2M48.5 72V55.3M49.5 72V56.3M50.5 72V53.6M51.5 72V0.4M52.5 72V54.3M53.5 72V55.6M54.5 72V53.0M55.5 72V2.8M56.5 72V56.6M57.5 72V60.8M58.5 72V53.4M59.5 72V53.9M60.5 72V56.2M61.5 72V56.0M62.5 72V55.4M63.5 72V52.2M64.5 72V52.3M65.5 72V54.5M66.5 72V54.5M67.5 72V54.9M68.5 72V55.0M69.5 72V52.4M70.5 72V54.5M71.5 72V56.3M72.5 72V53.2M73.5 72V55.1M74.5 72V53.2M75.5 72V53.7M76.5 72V55.1M77.5 72V55.4M78.5 72V53.2M79.5 72V55.4M80.5 72V53.8M81.5 72V56.6M82.5 72V55.6M83.5 72V54.6M84.5 72V53.8M85.5 72V55.1M86.5 72V53.4M87.5 72V55.1M88.5 72V52.8M89.5 72V52.3M90.5 72V54.4M91.5 72V56.0M92.5 72V52.5M93.5 72V53.6M94.5 72V53.4M95.5 72V53.2M96.5 72V53.7M97.5 72V53.9M98.5 72V53.8M99.5 72V56.6M100.5 72V54.7M101.5 72V55.7M102.5 72V19.6M103.5 72V37.9M104.5 72V55.3M105.5 72V19.9M106.5 72V55.0M107.5 72V54.0M108.5 72V22.6M109.5 72V55.4M110.5 72V56.2M111.5 72V13.7M112.5 72V56.3M113.5 72V55.2M114.5 72V52.4M115.5 72V54.8M116.5 72V53.8M117.5 72V56.1M118.5 72V54.2M119.5 72V52.3M120.5 72V55.1M121.5 72V15.6M122.5 72V53.9M123.5 72V53.9M124.5 72V55.0M125.5 72V55.7M126.5 72V52.3M127.5 72V52.4M128.5 72V54.0M129.5 72V52.3M130.5 72V54.8M131.5 72V52.3M132.5 72V55.4M133.5 72V56.2M134.5 72V54.7M135.5 72V53.2M136.5 72V56.6M137.5 72V55.5M138.5 72V53.2M139.5 72V55.5M140.5 72V52.3M141.5 72V54.0M142.5 72V53.8M143.5 72V8.2M144.5 72V55.3M145.5 72V55.2M146.5 72V54.3M147.5 72V55.1M148.5 72V30.4M149.5 72V54.6M150.5 72V52.7M151.5 72V56.6M152.5 72V54.8M153.5 72V53.5M154.5 72V54.5M155.5 72V3.4M156.5 72V4.0M157.5 72V42.5M158.5 72V20.1M159.5 72V36.7M160.5 72V51.1M161.5 72V51.1M162.5 72V10.5M163.5 72V22.4M164.5 72V36.2M165.5 72V6.7M166.5 72V34.9M167.5 72V3.7M168.5 72V41.5M169.5 72V35.6M170.5 72V1.9M171.5 72V43.0M172.5 72V9.9M173.5 72V17.8M174.5 72V11.6M175.5 72V40.4M176.5 72V21.0M177.5 72V53.7M178.5 72V35.4M179.5 72V10.4M180.5 72V44.1M181.5 72V43.8M182.5 72V45.7M183.5 72V45.5M184.5 72V24.7M185.5 72V43.7M186.5 72V44.5M187.5 72V8.7M188.5 72V10.6M189.5 72V41.5M190.5 72V4.8M191.5 72V41.6M192.5 72V1.0M193.5 72V25.2M194.5 72V30.4M195.5 72V8.2M196.5 72V15.8M197.5 72V14.1M198.5 72V36.8M199.5 72V31.6M200.5 72V33.7M201.5 72V32.9M202.5 72V32.6M203.5 72V28.3M204.5 72V2.2M205.5 72V34.1M206.5 72V47.9M207.5 72V30.6M208.5 72V48.1M209.5 72V22.4M210.5 72V2.5M211.5 72V17.9M212.5 72V19.2M213.5 72V1.5M214.5 72V34.8M215.5 72V31.4M216.5 72V33.2M217.5 72V36.5M218.5 72V34.6M219.5 72V19.4M220.5 72V24.5M221.5 72V33.4M222.5 72V11.6M223.5 72V35.2M224.5 72V18.7M225.5 72V32.5M226.5 72V0.5M227.5 72V4.8M228.5 72V10.8M229.5 72V50.2M230.5 72V30.1M231.5 72V51.4M232.5 72V22.7M233.5 72V33.1M234.5 72V21.1M235.5 72V0.7M236.5 72V53.7M237.5 72V44.3M238.5 72V31.7M239.5 72V43.4M240.5 72V42.9M241.5 72V13.2M242.5 72V43.1M243.5 72V43.5M244.5 72V40.4M245.5 72V4.4M246.5 72V20.3M247.5 72V44.1M248.5 72V27.9M249.5 72V30.3M250.5 72V40.4M251.5 72V7.5M252.5 72V20.5M253.5 72V15.7M254.5 72V41.2M255.5 72V39.2M256.5 72V38.5M257.5 72V4.5M258.5 72V38.7M259.5 72V38.2M260.5 72V41.9M261.5 72V31.4M262.5 72V8.1M263.5 72V5.7M264.5 72V31.6M265.5 72V3.2M266.5 72V33.5M267.5 72V16.3M268.5 72V9.6M269.5 72V31.9M270.5 72V38.0M271.5 72V36.5M272.5 72V33.0M273.5 72V15.3M274.5 72V46.0M275.5 72V4.3M276.5 72V25.6M277.5 72V25.0M278.5 72V34.3M279.5 72V0.4M280.5 72V35.5M281.5 72V31.1M282.5 72V16.3M283.5 72V35.2M284.5 72V34.2M285.5 72V18.4M286.5 72V29.6M287.5 72V31.6M288.5 72V3.6M289.5 72V23.1M290.5 72V40.3M291.5 72V4.6M292.5 72V38.9M293.5 72V34.3M294.5 72V34.4M295.5 72V37.6M296.5 72V18.3M297.5 72V16.1M298.5 72V37.8M299.5 72V38.5M300.5 72V34.8M301.5 72V35.9M302.5 72V37.5M303.5 72V39.2M304.5 72V36.8M305.5 72V29.2M306.5 72V40.5M307.5 72V37.8M308.5 72V42.1M309.5 72V43.0M310.5 72V45.2M311.5 72V41.3M312.5 72V40.3M313.5 72V41.3M314.5 72V14.2M315.5 72V0.7M316.5 72V42.6M317.5 72V9.9M318.5 72V41.7M319.5 72V32.0M320.5 72V42.3M321.5 72V2.9M322.5 72V22.8M323.5 72V40.6M324.5 72V43.4M325.5 72V31.6M326.5 72V38.3M327.5 72V34.7M328.5 72V11.5M329.5 72V19.0M330.5 72V34.8M331.5 72V24.9M332.5 72V34.3M333.5 72V9.0M334.5 72V33.0M335.5 72V11.8M336.5 72V31.1M337.5 72V36.2M338.5 72V33.2M339.5 72V37.3M340.5 72V48.4M341.5 72V22.8M342.5 72V8.6M343.5 72V38.7M344.5 72V32.6M345.5 72V31.8M346.5 72V30.3M347.5 72V32.9M348.5 72V26.4M349.5 72V12.1M350.5 72V31.1M351.5 72V9.6M352.5 72V8.3M353.5 72V33.0M354.5 72V31.5M355.5 72V4.6M356.5 72V21.9M357.5 72V5.1M358.5 72V16.1M359.5 72V32.2M360.5 72V29.9M361.5 72V3.1M362.5 72V13.5M363.5 72V37.7M364.5 72V26.6M365.5 72V37.3M366.5 72V1.5M367.5 72V4.5M368.5 72V44.0M369.5 72V22.5M370.5 72V13.3M371.5 72V0.6M372.5 72V53.2M373.5 72V1.1M374.5 72V53.4M375.5 72V5.9M376.5 72V43.2M377.5 72V39.4M378.5 72V37.0M379.5 72V3.2M380.5 72V39.0M381.5 72V42.1M382.5 72V38.8M383.5 72V43.4M384.5 72V41.0M385.5 72V16.0M386.5 72V51.8M387.5 72V42.0M388.5 72V14.8M389.5 72V2.5M390.5 72V36.3M391.5 72V38.3M392.5 72V23.3M393.5 72V38.0M394.5 72V16.2M395.5 72V43.2M396.5 72V42.3M397.5 72V52.3M398.5 72V36.9M399.5 72V9.2M400.5 72V13.9M401.5 72V38.3M402.5 72V40.4M403.5 72V39.4M404.5 72V12.6M405.5 72V5.0M406.5 72V48.1M407.5 72V32.5M408.5 72V47.0M409.5 72V14.6M410.5 72V11.6M411.5 72V29.3M412.5 72V32.0M413.5 72V28.2M414.5 72V25.7M415.5 72V1.2M416.5 72V5.0M417.5 72V1.4M418.5 72V33.9M419.5 72V14.6M420.5 72V33.0M421.5 72V47.5M422.5 72V15.7M423.5 72V38.1M424.5 72V4.6M425.5 72V3.7M426.5 72V8.5M427.5 72V2.7M428.5 72V36.8M429.5 72V29.4M430.5 72V34.1M431.5 72V3.9M432.5 72V36.2M433.5 72V40.3M434.5 72V39.6M435.5 72V35.1M436.5 72V38.8M437.5 72V7.2M438.5 72V13.3M439.5 72V35.7M440.5 72V8.5M441.5 72V5.8M442.5 72V37.2M443.5 72V51.4M444.5 72V51.9M445.5 72V22.2M446.5 72V31.5M447.5 72V16.8M448.5 72V42.4M449.5 72V15.0M450.5 72V12.4M451.5 72V24.0M452.5 72V44.9M453.5 72V42.0M454.5 72V6.0M455.5 72V32.2M456.5 72V2.9M457.5 72V45.0M458.5 72V41.5M459.5 72V44.8M460.5 72V9.7M461.5 72V37.4M462.5 72V43.1M463.5 72V39.6M464.5 72V15.4M465.5 72V29.4M466.5 72V2.9M467.5 72V22.8M468.5 72V32.0M469.5 72V49.0M470.5 72V20.6M471.5 72V40.2M472.5 72V11.6M473.5 72V31.9M474.5 72V5.1M475.5 72V39.5M476.5 72V39.8M477.5 72V19.0M478.5 72V35.4M479.5 72V11.4M480.5 72V8.2M481.5 72V4.0M482.5 72V27.8M483.5 72V47.9M484.5 72V34.1M485.5 72V47.2M486.5 72V34.6M487.5 72V46.5M488.5 72V28.7M489.5 72V5.9M490.5 72V0.0M491.5 72V22.6M492.5 72V31.2M493.5 72V5.7M494.5 72V35.2M495.5 72V25.3M496.5 72V4.6M497.5 72V34.6M498.5 72V47.7M499.5 72V31.1M500.5 72V2.6M501.5 72V14.6M502.5 72V8.2M503.5 72V36.2M504.5 72V43.4M505.5 72V41.5M506.5 72V4.0M507.5 72V6.9M508.5 72V41.3M509.5 72V40.7M510.5 72V52.7M511.5 72V45.5M512.5 72V39.4M513.5 72V44.9M514.5 72V24.9M515.5 72V37.1M516.5 72V42.8M517.5 72V9.2M518.5 72V37.1M519.5 72V39.1M520.5 72V51.9M521.5 72V6.7M522.5 72V41.6M523.5 72V8.1M524.5 72V4.0M525.5 72V37.4M526.5 72V15.3M527.5 72V42.5M528.5 72V42.5M529.5 72V46.1M530.5 72V40.6M531.5 72V40.0M532.5 72V40.8M533.5 72V2.9M534.5 72V32.9M535.5 72V18.2M536.5 72V38.4M537.5 72V6.7M538.5 72V1.1M539.5 72V34.5M540.5 72V13.7M541.5 72V13.2M542.5 72V32.4M543.5 72V30.6M544.5 72V30.7M545.5 72V28.4M546.5 72V32.9M547.5 72V29.9M548.5 72V19.1M549.5 72V6.2M550.5 72V9.5M551.5 72V22.9M552.5 72V21.0M553.5 72V21.0M554.5 72V29.9M555.5 72V32.3M556.5 72V1.5M557.5 72V31.1M558.5 72V38.4M559.5 72V48.1M560.5 72V48.3M561.5 72V31.0M562.5 72V13.7M563.5 72V35.7M564.5 72V3.9M565.5 72V39.1M566.5 72V37.6M567.5 72V5.8M568.5 72V3.0M569.5 72V7.0M570.5 72V48.2M571.5 72V38.7M572.5 72V30.9M573.5 72V48.6M574.5 72V23.5M575.5 72V28.0M576.5 72V18.8M577.5 72V1.5M578.5 72V17.6M579.5 72V18.1M580.5 72V42.4M581.5 72V3.4M582.5 72V43.1M583.5 72V42.9M584.5 72V22.5M585.5 72V45.5M586.5 72V14.6M587.5 72V44.5M588.5 72V47.0M589.5 72V46.0M590.5 72V18.0M591.5 72V44.3M592.5 72V47.6M593.5 72V17.7M594.5 72V33.9M595.5 72V45.1M596.5 72V11.3M597.5 72V48.1M598.5 72V49.7M599.5 72V48.9M600.5 72V45.5M601.5 72V44.4M602.5 72V46.0M603.5 72V48.8M604.5 72V47.9M605.5 72V49.2M606.5 72V47.6M607.5 72V43.9M608.5 72V47.4M609.5 72V7.4M610.5 72V45.3M611.5 72V19.0M612.5 72V43.9M613.5 72V48.3M614.5 72V47.1M615.5 72V55.9M616.5 72V49.7M617.5 72V15.7M618.5 72V46.2M619.5 72V44.1M620.5 72V48.0M621.5 72V1.8M622.5 72V49.7M623.5 72V48.2M624.5 72V0.3M625.5 72V17.3M626.5 72V29.0M627.5 72V43.6M628.5 72V33.8M629.5 72V43.5M630.5 72V26.2M631.5 72V19.8M632.5 72V19.9M633.5 72V46.9M634.5 72V3.0M635.5 72V30.8M636.5 72V32.9M637.5 72V10.0M638.5 72V19.9M639.5 72V28.7M640.5 72V1.0M641.5 72V39.1M642.5 72V37.4M643.5 72V19.4M644.5 72V39.0M645.5 72V26.8M646.5 72V44.3M647.5 72V20.2M648.5 72V8.6M649.5 72V6.7M650.5 72V42.4M651.5 72V43.0M652.5 72V38.1M653.5 72V39.9M654.5 72V38.7M655.5 72V14.4M656.5 72V6.5M657.5 72V51.9M658.5 72V40.6M659.5 72V42.8M660.5 72V40.8M661.5 72V15.0M662.5 72V41.8M663.5 72V12.4M664.5 72V1.8M665.5 72V53.8M666.5 72V23.3M667.5 72V2.4M668.5 72V8.4M669.5 72V24.8M670.5 72V44.2M671.5 72V14.7M672.5 72V8.7M673.5 72V51.9M674.5 72V39.2M675.5 72V34.6M676.5 72V50.1M677.5 72V7.3M678.5 72V36.8M679.5 72V33.7M680.5 72V29.8M681.5 72V31.3M682.5 72V35.5M683.5 72V4.9M684.5 72V46.7M685.5 72V31.9M686.5 72V46.6M687.5 72V9.0M688.5 72V5.8M689.5 72V4.5M690.5 72V31.6M691.5 72V30.6M692.5 72V47.7M693.5 72V32.9M694.5 72V29.8M695.5 72V13.4M696.5 72V30.5M697.5 72V4.9M698.5 72V34.1M699.5 72V33.0M700.5 72V32.0M701.5 72V47.8M702.5 72V32.2M703.5 72V38.0M704.5 72V47.4M705.5 72V1.4M706.5 72V3.8M707.5 72V36.0M708.5 72V33.0M709.5 72V18.4M710.5 72V24.2M711.5 72V5.0M712.5 72V19.8M713.5 72V38.6M714.5 72V11.8M715.5 72V5.1M716.5 72V5.7M717.5 72V40.1M718.5 72V42.8M719.5 72V45.7M720.5 72V23.4M721.5 72V39.9M722.5 72V42.2M723.5 72V16.0M724.5 72V41.4M725.5 72V46.7M726.5 72V33.6M727.5 72V44.3M728.5 72V1.3M729.5 72V5.9M730.5 72V30.9M731.5 72V43.8M732.5 72V40.2M733.5 72V39.2M734.5 72V26.8M735.5 72V16.2M736.5 72V43.4M737.5 72V19.1M738.5 72V3.5M739.5 72V29.2M740.5 72V35.3M741.5 72V40.5M742.5 72V42.6M743.5 72V35.1M744.5 72V3.9M745.5 72V22.1M746.5 72V42.5M747.5 72V2.4M748.5 72V50.7M749.5 72V1.2M750.5 72V50.2M751.5 72V0.4M752.5 72V38.2M753.5 72V32.8M754.5 72V18.3M755.5 72V32.8M756.5 72V15.3M757.5 72V18.8M758.5 72V17.0M759.5 72V32.3M760.5 72V29.8M761.5 72V2.2M762.5 72V4.8M763.5 72V27.2M764.5 72V30.3M765.5 72V17.4M766.5 72V0.9M767.5 72V12.4M768.5 72V34.0M769.5 72V2.2M770.5 72V12.0M771.5 72V36.7M772.5 72V17.3M773.5 72V48.8M774.5 72V36.4M775.5 72V40.6M776.5 72V41.8M777.5 72V39.0M778.5 72V42.5M779.5 72V42.6M780.5 72V45.6M781.5 72V49.1M782.5 72V47.9M783.5 72V10.0M784.5 72V49.4M785.5 72V48.4M786.5 72V49.1M787.5 72V48.5M788.5 72V51.5M789.5 72V53.8M790.5 72V53.1M791.5 72V56.1M792.5 72V56.2M793.5 72V55.1M794.5 72V57.8M795.5 72V55.9M796.5 72V58.5M797.5 72V58.7M798.5 72V61.2M799.5 72V60.4M800.5 72V60.1M801.5 72V61.2M802.5 72V62.8M803.5 72V63.6M804.5 72V63.7M805.5 72V65.6M806.5 72V65.5M807.5 72V66.1M808.5 72V66.7M809.5 72V67.8M810.5 72V68.1M811.5 72V68.3M812.5 72V68.9M813.5 72V69.9M814.5 72V70.3M815.5 72V70.5M816.5 72V71.2M817.5 72V71.4" stroke="#5b6a9e" stroke-width="1" fill="none"/><path d="M0 45.5H818V72H0Z" fill="rgba(255,255,255,0.32)"/><path d="M0 45.5H818" fill="none" stroke="#f4f4f4" stroke-width="1.2"/></svg><div style="left:975px;top:1226px;width:818px;height:1px;background:#4a7a5a;"></div><div style="left:975px;top:1299px;width:818px;height:1px;background:#4a7a5a;"></div><div style="left:975px;top:1226px;width:1px;height:74px;background:#4a7a5a;"></div><div style="left:1792px;top:1226px;width:1px;height:74px;background:#4a7a5a;"></div><div style="left:976px;top:1227px;width:136px;height:17px;background:#646464;"></div><div class="t" style="left:976.8px;top:1230.10px;font-size:13px;line-height:13px;color:#e8e8e8;transform:scaleX(1.0453);transform-origin:0 0;">Volume (keyframable)</div><div style="left:1566px;top:1227px;width:226px;height:17px;background:rgba(60,60,60,0.55);"></div><div class="t" style="left:1567px;top:1229.70px;font-size:13px;line-height:13px;color:#e0e0e0;transform:scaleX(1.0435);transform-origin:0 0;">01 - zero-project - The eighth sin.mp3</div><svg style="left:1751px;top:1152px;shape-rendering:crispEdges" width="819" height="72" viewBox="0 0 819 72"><rect x="0" y="0" width="819" height="72" fill="#8cd8a4"/><path d="M6.5 72V53.9M7.5 72V53.1M8.5 72V53.4M9.5 72V56.6M10.5 72V52.5M11.5 72V19.7M12.5 72V55.6M13.5 72V32.4M14.5 72V55.4M15.5 72V53.3M16.5 72V60.8M17.5 72V60.8M18.5 72V56.7M19.5 72V55.8M20.5 72V52.3M21.5 72V55.4M22.5 72V54.3M23.5 72V55.8M24.5 72V53.6M25.5 72V52.7M26.5 72V55.1M27.5 72V27.7M28.5 72V11.2M29.5 72V55.2M30.5 72V53.0M31.5 72V55.3M32.5 72V0.8M33.5 72V56.6M34.5 72V7.2M35.5 72V55.1M36.5 72V34.6M37.5 72V52.4M38.5 72V53.3M39.5 72V52.5M40.5 72V55.1M41.5 72V8.6M42.5 72V53.1M43.5 72V56.5M44.5 72V56.3M45.5 72V54.0M46.5 72V55.2M47.5 72V54.2M48.5 72V55.3M49.5 72V56.3M50.5 72V53.6M51.5 72V0.4M52.5 72V54.3M53.5 72V55.6M54.5 72V53.0M55.5 72V2.8M56.5 72V56.6M57.5 72V60.8M58.5 72V53.4M59.5 72V53.9M60.5 72V56.2M61.5 72V56.0M62.5 72V55.4M63.5 72V52.2M64.5 72V52.3M65.5 72V54.5M66.5 72V54.5M67.5 72V54.9M68.5 72V55.0M69.5 72V52.4M70.5 72V54.5M71.5 72V56.3M72.5 72V53.2M73.5 72V55.1M74.5 72V53.2M75.5 72V53.7M76.5 72V55.1M77.5 72V55.4M78.5 72V53.2M79.5 72V55.4M80.5 72V53.8M81.5 72V56.6M82.5 72V55.6M83.5 72V54.6M84.5 72V53.8M85.5 72V55.1M86.5 72V53.4M87.5 72V55.1M88.5 72V52.8M89.5 72V52.3M90.5 72V54.4M91.5 72V56.0M92.5 72V52.5M93.5 72V53.6M94.5 72V53.4M95.5 72V53.2M96.5 72V53.7M97.5 72V53.9M98.5 72V53.8M99.5 72V56.6M100.5 72V54.7M101.5 72V55.7M102.5 72V19.6M103.5 72V37.9M104.5 72V55.3M105.5 72V19.9M106.5 72V55.0M107.5 72V54.0M108.5 72V22.6M109.5 72V55.4M110.5 72V56.2M111.5 72V13.7M112.5 72V56.3M113.5 72V55.2M114.5 72V52.4M115.5 72V54.8M116.5 72V53.8M117.5 72V56.1M118.5 72V54.2M119.5 72V52.3M120.5 72V55.1M121.5 72V15.6M122.5 72V53.9M123.5 72V53.9M124.5 72V55.0M125.5 72V55.7M126.5 72V52.3M127.5 72V52.4M128.5 72V54.0M129.5 72V52.3M130.5 72V54.8M131.5 72V52.3M132.5 72V55.4M133.5 72V56.2M134.5 72V54.7M135.5 72V53.2M136.5 72V56.6M137.5 72V55.5M138.5 72V53.2M139.5 72V55.5M140.5 72V52.3M141.5 72V54.0M142.5 72V53.8M143.5 72V8.2M144.5 72V55.3M145.5 72V55.2M146.5 72V54.3M147.5 72V55.1M148.5 72V30.4M149.5 72V54.6M150.5 72V52.7M151.5 72V56.6M152.5 72V54.8M153.5 72V53.5M154.5 72V54.5M155.5 72V3.4M156.5 72V4.0M157.5 72V42.5M158.5 72V20.1M159.5 72V36.7M160.5 72V51.1M161.5 72V51.1M162.5 72V10.5M163.5 72V22.4M164.5 72V36.2M165.5 72V6.7M166.5 72V34.9M167.5 72V3.7M168.5 72V41.5M169.5 72V35.6M170.5 72V1.9M171.5 72V43.0M172.5 72V9.9M173.5 72V17.8M174.5 72V11.6M175.5 72V40.4M176.5 72V21.0M177.5 72V53.7M178.5 72V35.4M179.5 72V10.4M180.5 72V44.1M181.5 72V43.8M182.5 72V45.7M183.5 72V45.5M184.5 72V24.7M185.5 72V43.7M186.5 72V44.5M187.5 72V8.7M188.5 72V10.6M189.5 72V41.5M190.5 72V4.8M191.5 72V41.6M192.5 72V1.0M193.5 72V25.2M194.5 72V30.4M195.5 72V8.2M196.5 72V15.8M197.5 72V14.1M198.5 72V36.8M199.5 72V31.6M200.5 72V33.7M201.5 72V32.9M202.5 72V32.6M203.5 72V28.3M204.5 72V2.2M205.5 72V34.1M206.5 72V47.9M207.5 72V30.6M208.5 72V48.1M209.5 72V22.4M210.5 72V2.5M211.5 72V17.9M212.5 72V19.2M213.5 72V1.5M214.5 72V34.8M215.5 72V31.4M216.5 72V33.2M217.5 72V36.5M218.5 72V34.6M219.5 72V19.4M220.5 72V24.5M221.5 72V33.4M222.5 72V11.6M223.5 72V35.2M224.5 72V18.7M225.5 72V32.5M226.5 72V0.5M227.5 72V4.8M228.5 72V10.8M229.5 72V50.2M230.5 72V30.1M231.5 72V51.4M232.5 72V22.7M233.5 72V33.1M234.5 72V21.1M235.5 72V0.7M236.5 72V53.7M237.5 72V44.3M238.5 72V31.7M239.5 72V43.4M240.5 72V42.9M241.5 72V13.2M242.5 72V43.1M243.5 72V43.5M244.5 72V40.4M245.5 72V4.4M246.5 72V20.3M247.5 72V44.1M248.5 72V27.9M249.5 72V30.3M250.5 72V40.4M251.5 72V7.5M252.5 72V20.5M253.5 72V15.7M254.5 72V41.2M255.5 72V39.2M256.5 72V38.5M257.5 72V4.5M258.5 72V38.7M259.5 72V38.2M260.5 72V41.9M261.5 72V31.4M262.5 72V8.1M263.5 72V5.7M264.5 72V31.6M265.5 72V3.2M266.5 72V33.5M267.5 72V16.3M268.5 72V9.6M269.5 72V31.9M270.5 72V38.0M271.5 72V36.5M272.5 72V33.0M273.5 72V15.3M274.5 72V46.0M275.5 72V4.3M276.5 72V25.6M277.5 72V25.0M278.5 72V34.3M279.5 72V0.4M280.5 72V35.5M281.5 72V31.1M282.5 72V16.3M283.5 72V35.2M284.5 72V34.2M285.5 72V18.4M286.5 72V29.6M287.5 72V31.6M288.5 72V3.6M289.5 72V23.1M290.5 72V40.3M291.5 72V4.6M292.5 72V38.9M293.5 72V34.3M294.5 72V34.4M295.5 72V37.6M296.5 72V18.3M297.5 72V16.1M298.5 72V37.8M299.5 72V38.5M300.5 72V34.8M301.5 72V35.9M302.5 72V37.5M303.5 72V39.2M304.5 72V36.8M305.5 72V29.2M306.5 72V40.5M307.5 72V37.8M308.5 72V42.1M309.5 72V43.0M310.5 72V45.2M311.5 72V41.3M312.5 72V40.3M313.5 72V41.3M314.5 72V14.2M315.5 72V0.7M316.5 72V42.6M317.5 72V9.9M318.5 72V41.7M319.5 72V32.0M320.5 72V42.3M321.5 72V2.9M322.5 72V22.8M323.5 72V40.6M324.5 72V43.4M325.5 72V31.6M326.5 72V38.3M327.5 72V34.7M328.5 72V11.5M329.5 72V19.0M330.5 72V34.8M331.5 72V24.9M332.5 72V34.3M333.5 72V9.0M334.5 72V33.0M335.5 72V11.8M336.5 72V31.1M337.5 72V36.2M338.5 72V33.2M339.5 72V37.3M340.5 72V48.4M341.5 72V22.8M342.5 72V8.6M343.5 72V38.7M344.5 72V32.6M345.5 72V31.8M346.5 72V30.3M347.5 72V32.9M348.5 72V26.4M349.5 72V12.1M350.5 72V31.1M351.5 72V9.6M352.5 72V8.3M353.5 72V33.0M354.5 72V31.5M355.5 72V4.6M356.5 72V21.9M357.5 72V5.1M358.5 72V16.1M359.5 72V32.2M360.5 72V29.9M361.5 72V3.1M362.5 72V13.5M363.5 72V37.7M364.5 72V26.6M365.5 72V37.3M366.5 72V1.5M367.5 72V4.5M368.5 72V44.0M369.5 72V22.5M370.5 72V13.3M371.5 72V0.6M372.5 72V53.2M373.5 72V1.1M374.5 72V53.4M375.5 72V5.9M376.5 72V43.2M377.5 72V39.4M378.5 72V37.0M379.5 72V3.2M380.5 72V39.0M381.5 72V42.1M382.5 72V38.8M383.5 72V43.4M384.5 72V41.0M385.5 72V16.0M386.5 72V51.8M387.5 72V42.0M388.5 72V14.8M389.5 72V2.5M390.5 72V36.3M391.5 72V38.3M392.5 72V23.3M393.5 72V38.0M394.5 72V16.2M395.5 72V43.2M396.5 72V42.3M397.5 72V52.3M398.5 72V36.9M399.5 72V9.2M400.5 72V13.9M401.5 72V38.3M402.5 72V40.4M403.5 72V39.4M404.5 72V12.6M405.5 72V5.0M406.5 72V48.1M407.5 72V32.5M408.5 72V47.0M409.5 72V14.6M410.5 72V11.6M411.5 72V29.3M412.5 72V32.0M413.5 72V28.2M414.5 72V25.7M415.5 72V1.2M416.5 72V5.0M417.5 72V1.4M418.5 72V33.9M419.5 72V14.6M420.5 72V33.0M421.5 72V47.5M422.5 72V15.7M423.5 72V38.1M424.5 72V4.6M425.5 72V3.7M426.5 72V8.5M427.5 72V2.7M428.5 72V36.8M429.5 72V29.4M430.5 72V34.1M431.5 72V3.9M432.5 72V36.2M433.5 72V40.3M434.5 72V39.6M435.5 72V35.1M436.5 72V38.8M437.5 72V7.2M438.5 72V13.3M439.5 72V35.7M440.5 72V8.5M441.5 72V5.8M442.5 72V37.2M443.5 72V51.4M444.5 72V51.9M445.5 72V22.2M446.5 72V31.5M447.5 72V16.8M448.5 72V42.4M449.5 72V15.0M450.5 72V12.4M451.5 72V24.0M452.5 72V44.9M453.5 72V42.0M454.5 72V6.0M455.5 72V32.2M456.5 72V2.9M457.5 72V45.0M458.5 72V41.5M459.5 72V44.8M460.5 72V9.7M461.5 72V37.4M462.5 72V43.1M463.5 72V39.6M464.5 72V15.4M465.5 72V29.4M466.5 72V2.9M467.5 72V22.8M468.5 72V32.0M469.5 72V49.0M470.5 72V20.6M471.5 72V40.2M472.5 72V11.6M473.5 72V31.9M474.5 72V5.1M475.5 72V39.5M476.5 72V39.8M477.5 72V19.0M478.5 72V35.4M479.5 72V11.4M480.5 72V8.2M481.5 72V4.0M482.5 72V27.8M483.5 72V47.9M484.5 72V34.1M485.5 72V47.2M486.5 72V34.6M487.5 72V46.5M488.5 72V28.7M489.5 72V5.9M490.5 72V0.0M491.5 72V22.6M492.5 72V31.2M493.5 72V5.7M494.5 72V35.2M495.5 72V25.3M496.5 72V4.6M497.5 72V34.6M498.5 72V47.7M499.5 72V31.1M500.5 72V2.6M501.5 72V14.6M502.5 72V8.2M503.5 72V36.2M504.5 72V43.4M505.5 72V41.5M506.5 72V4.0M507.5 72V6.9M508.5 72V41.3M509.5 72V40.7M510.5 72V52.7M511.5 72V45.5M512.5 72V39.4M513.5 72V44.9M514.5 72V24.9M515.5 72V37.1M516.5 72V42.8M517.5 72V9.2M518.5 72V37.1M519.5 72V39.1M520.5 72V51.9M521.5 72V6.7M522.5 72V41.6M523.5 72V8.1M524.5 72V4.0M525.5 72V37.4M526.5 72V15.3M527.5 72V42.5M528.5 72V42.5M529.5 72V46.1M530.5 72V40.6M531.5 72V40.0M532.5 72V40.8M533.5 72V2.9M534.5 72V32.9M535.5 72V18.2M536.5 72V38.4M537.5 72V6.7M538.5 72V1.1M539.5 72V34.5M540.5 72V13.7M541.5 72V13.2M542.5 72V32.4M543.5 72V30.6M544.5 72V30.7M545.5 72V28.4M546.5 72V32.9M547.5 72V29.9M548.5 72V19.1M549.5 72V6.2M550.5 72V9.5M551.5 72V22.9M552.5 72V21.0M553.5 72V21.0M554.5 72V29.9M555.5 72V32.3M556.5 72V1.5M557.5 72V31.1M558.5 72V38.4M559.5 72V48.1M560.5 72V48.3M561.5 72V31.0M562.5 72V13.7M563.5 72V35.7M564.5 72V3.9M565.5 72V39.1M566.5 72V37.6M567.5 72V5.8M568.5 72V3.0M569.5 72V7.0M570.5 72V48.2M571.5 72V38.7M572.5 72V30.9M573.5 72V48.6M574.5 72V23.5M575.5 72V28.0M576.5 72V18.8M577.5 72V1.5M578.5 72V17.6M579.5 72V18.1M580.5 72V42.4M581.5 72V3.4M582.5 72V43.1M583.5 72V42.9M584.5 72V22.5M585.5 72V45.5M586.5 72V14.6M587.5 72V44.5M588.5 72V47.0M589.5 72V46.0M590.5 72V18.0M591.5 72V44.3M592.5 72V47.6M593.5 72V17.7M594.5 72V33.9M595.5 72V45.1M596.5 72V11.3M597.5 72V48.1M598.5 72V49.7M599.5 72V48.9M600.5 72V45.5M601.5 72V44.4M602.5 72V46.0M603.5 72V48.8M604.5 72V47.9M605.5 72V49.2M606.5 72V47.6M607.5 72V43.9M608.5 72V47.4M609.5 72V7.4M610.5 72V45.3M611.5 72V19.0M612.5 72V43.9M613.5 72V48.3M614.5 72V47.1M615.5 72V55.9M616.5 72V49.7M617.5 72V15.7M618.5 72V46.2M619.5 72V44.1M620.5 72V48.0M621.5 72V1.8M622.5 72V49.7M623.5 72V48.2M624.5 72V0.3M625.5 72V17.3M626.5 72V29.0M627.5 72V43.6M628.5 72V33.8M629.5 72V43.5M630.5 72V26.2M631.5 72V19.8M632.5 72V19.9M633.5 72V46.9M634.5 72V3.0M635.5 72V30.8M636.5 72V32.9M637.5 72V10.0M638.5 72V19.9M639.5 72V28.7M640.5 72V1.0M641.5 72V39.1M642.5 72V37.4M643.5 72V19.4M644.5 72V39.0M645.5 72V26.8M646.5 72V44.3M647.5 72V20.2M648.5 72V8.6M649.5 72V6.7M650.5 72V42.4M651.5 72V43.0M652.5 72V38.1M653.5 72V39.9M654.5 72V38.7M655.5 72V14.4M656.5 72V6.5M657.5 72V51.9M658.5 72V40.6M659.5 72V42.8M660.5 72V40.8M661.5 72V15.0M662.5 72V41.8M663.5 72V12.4M664.5 72V1.8M665.5 72V53.8M666.5 72V23.3M667.5 72V2.4M668.5 72V8.4M669.5 72V24.8M670.5 72V44.2M671.5 72V14.7M672.5 72V8.7M673.5 72V51.9M674.5 72V39.2M675.5 72V34.6M676.5 72V50.1M677.5 72V7.3M678.5 72V36.8M679.5 72V33.7M680.5 72V29.8M681.5 72V31.3M682.5 72V35.5M683.5 72V4.9M684.5 72V46.7M685.5 72V31.9M686.5 72V46.6M687.5 72V9.0M688.5 72V5.8M689.5 72V4.5M690.5 72V31.6M691.5 72V30.6M692.5 72V47.7M693.5 72V32.9M694.5 72V29.8M695.5 72V13.4M696.5 72V30.5M697.5 72V4.9M698.5 72V34.1M699.5 72V33.0M700.5 72V32.0M701.5 72V47.8M702.5 72V32.2M703.5 72V38.0M704.5 72V47.4M705.5 72V1.4M706.5 72V3.8M707.5 72V36.0M708.5 72V33.0M709.5 72V18.4M710.5 72V24.2M711.5 72V5.0M712.5 72V19.8M713.5 72V38.6M714.5 72V11.8M715.5 72V5.1M716.5 72V5.7M717.5 72V40.1M718.5 72V42.8M719.5 72V45.7M720.5 72V23.4M721.5 72V39.9M722.5 72V42.2M723.5 72V16.0M724.5 72V41.4M725.5 72V46.7M726.5 72V33.6M727.5 72V44.3M728.5 72V1.3M729.5 72V5.9M730.5 72V30.9M731.5 72V43.8M732.5 72V40.2M733.5 72V39.2M734.5 72V26.8M735.5 72V16.2M736.5 72V43.4M737.5 72V19.1M738.5 72V3.5M739.5 72V29.2M740.5 72V35.3M741.5 72V40.5M742.5 72V42.6M743.5 72V35.1M744.5 72V3.9M745.5 72V22.1M746.5 72V42.5M747.5 72V2.4M748.5 72V50.7M749.5 72V1.2M750.5 72V50.2M751.5 72V0.4M752.5 72V38.2M753.5 72V32.8M754.5 72V18.3M755.5 72V32.8M756.5 72V15.3M757.5 72V18.8M758.5 72V17.0M759.5 72V32.3M760.5 72V29.8M761.5 72V2.2M762.5 72V4.8M763.5 72V27.2M764.5 72V30.3M765.5 72V17.4M766.5 72V0.9M767.5 72V12.4M768.5 72V34.0M769.5 72V2.2M770.5 72V12.0M771.5 72V36.7M772.5 72V17.3M773.5 72V48.8M774.5 72V36.4M775.5 72V40.6M776.5 72V41.8M777.5 72V39.0M778.5 72V42.5M779.5 72V42.6M780.5 72V45.6M781.5 72V49.1M782.5 72V47.9M783.5 72V10.0M784.5 72V49.4M785.5 72V48.4M786.5 72V49.1M787.5 72V48.5M788.5 72V51.5M789.5 72V53.8M790.5 72V53.1M791.5 72V56.1M792.5 72V56.2M793.5 72V55.1M794.5 72V57.8M795.5 72V55.9M796.5 72V58.5M797.5 72V58.7M798.5 72V61.2M799.5 72V60.4M800.5 72V60.1M801.5 72V61.2M802.5 72V62.8M803.5 72V63.6M804.5 72V63.7M805.5 72V65.6M806.5 72V65.5M807.5 72V66.1M808.5 72V66.7M809.5 72V67.8M810.5 72V68.1M811.5 72V68.3M812.5 72V68.9M813.5 72V69.9M814.5 72V70.3M815.5 72V70.5M816.5 72V71.2M817.5 72V71.4M818.5 72V71.7" stroke="#5b6a9e" stroke-width="1" fill="none"/><path d="M25 72L52 49L175 48L300 47L425 46.5L549 46L591 72Z" fill="rgba(255,255,255,0.32)"/><path d="M25 72L52 49L175 49L175 48L300 48L300 47L425 47L425 46.5L549 46L591 72" fill="none" stroke="#f4f4f4" stroke-width="1.2"/></svg><div style="left:1751px;top:1151px;width:819px;height:1px;background:#4a7a5a;"></div><div style="left:1751px;top:1224px;width:819px;height:1px;background:#4a7a5a;"></div><div style="left:1751px;top:1151px;width:1px;height:74px;background:#4a7a5a;"></div><div style="left:2569px;top:1151px;width:1px;height:74px;background:#4a7a5a;"></div><div style="left:1752px;top:1152px;width:136px;height:17px;background:#646464;"></div><div class="t" style="left:1752.8px;top:1155.10px;font-size:13px;line-height:13px;color:#e8e8e8;transform:scaleX(1.0453);transform-origin:0 0;">Volume (keyframable)</div><div style="left:2341px;top:1152px;width:228px;height:17px;background:rgba(60,60,60,0.55);"></div><div class="t" style="left:2342px;top:1154.70px;font-size:13px;line-height:13px;color:#e0e0e0;transform:scaleX(1.0435);transform-origin:0 0;">01 - zero-project - The eighth sin.mp3</div><div style="left:1825px;top:926px;width:1px;height:374px;background:#e6e6e6;"></div><svg style="left:1819px;top:919px;" width="13" height="7" viewBox="0 0 13 7"><path d="M0 0H12.5L6.25 6.5Z" fill="#e6e6e6"/></svg><div style="left:2347px;top:926px;width:1px;height:374px;background:#2424b0;"></div><div style="left:161px;top:1448px;width:2466px;height:13px;background:#4e4e4e;"></div><div style="left:161px;top:1448px;width:13px;height:13px;background:#555;border:1px solid #4a4a4a"></div><svg style="left:164px;top:1451px;" width="6" height="8" viewBox="0 0 6 8"><path d="M5 0v7.5l-4.5-3.75z" fill="#222"/></svg><div style="left:175px;top:1448px;width:2395px;height:13px;background:#575757;border:1px solid #666"></div><div style="left:2614px;top:1448px;width:13px;height:13px;background:#555;border:1px solid #4a4a4a"></div><svg style="left:2618px;top:1451px;" width="6" height="8" viewBox="0 0 6 8"><path d="M0.5 0v7.5l4.5-3.75z" fill="#222"/></svg><div style="left:5px;top:1461px;width:2624px;height:1px;background:#4a4a4a;"></div><svg style="left:2278px;top:1469px;" width="15" height="16" viewBox="0 0 15 16"><rect x="1" y="1" width="12.5" height="7" fill="#111"/><rect x="3" y="2.5" width="8.5" height="4.5" fill="#656565"/><g fill="#888"><rect x="1.6" y="2" width="0.9" height="0.9"/><rect x="1.6" y="4" width="0.9" height="0.9"/><rect x="1.6" y="6" width="0.9" height="0.9"/><rect x="12" y="2" width="0.9" height="0.9"/><rect x="12" y="4" width="0.9" height="0.9"/><rect x="12" y="6" width="0.9" height="0.9"/></g><path d="M1 12.2L3 10.2L5 12.2L3 14.2zM6 10v4.5M7.5 12.2L10.2 9.8L12.9 12.2L10.2 14.6z" fill="#111" stroke="#111" stroke-width="0.8"/></svg><svg style="left:2301px;top:1471px;" width="17" height="12" viewBox="0 0 17 12"><rect x="3" y="0.5" width="10" height="4" fill="none" stroke="#4a4a4a" stroke-width="0.9" stroke-dasharray="1.2 0.9"/><rect x="4" y="5.5" width="8.5" height="5.5" fill="none" stroke="#3e3e3e" stroke-width="1.1"/><rect x="0.5" y="4.5" width="1.2" height="1.2" fill="#222"/><rect x="15" y="4.5" width="1.2" height="1.2" fill="#222"/></svg><div style="left:2323px;top:1466px;width:24px;height:23px;background:#555555;border:1px solid #4a4a4a;border-radius:4px"></div><div style="left:2348px;top:1466px;width:24px;height:23px;background:#555555;border:1px solid #4a4a4a;border-radius:4px"></div><div style="left:2398px;top:1466px;width:24px;height:23px;background:#555555;border:1px solid #4a4a4a;border-radius:4px"></div><svg style="left:2329px;top:1471px;" width="12" height="12" viewBox="0 0 12 12"><rect x="0" y="0" width="12" height="12" fill="#111"/><rect x="2.5" y="1" width="7" height="4.3" fill="#5a5a5a"/><rect x="2.5" y="6.7" width="7" height="4.3" fill="#5a5a5a"/><g fill="#9a9a9a"><rect x="0.8" y="1.5" width="0.9" height="0.9"/><rect x="0.8" y="5.5" width="0.9" height="0.9"/><rect x="0.8" y="9.5" width="0.9" height="0.9"/><rect x="10.3" y="1.5" width="0.9" height="0.9"/><rect x="10.3" y="5.5" width="0.9" height="0.9"/><rect x="10.3" y="9.5" width="0.9" height="0.9"/></g></svg><svg style="left:2352px;top:1471px;" width="16" height="12" viewBox="0 0 16 12"><path d="M0.5 6L2.5 3.5L3.5 1.5L4.5 3.5L5 6L4.5 8.5L3.5 10.5L2.5 8.5z" fill="#111"/><rect x="4" y="5.3" width="3" height="1.4" fill="#111"/><path d="M7 6L11 0.5L15 6L11 11.5z" fill="#111"/></svg><svg style="left:2378px;top:1470px;" width="13" height="14" viewBox="0 0 13 14"><rect x="1" y="1" width="1.3" height="13" fill="#111"/><path d="M2 1.2C4 0.6 6 1.5 7.5 2.6C9 3.4 10.5 3.6 12.2 3.4C11.5 4.8 10.2 5.8 8.5 5.6C6.5 5.4 4.5 6.4 2 6.6z" fill="#111"/></svg><svg style="left:2403px;top:1470px;" width="14" height="14" viewBox="0 0 14 14"><rect x="2" y="0.5" width="1.3" height="13" fill="#111"/><rect x="1" y="5.3" width="3.2" height="3" fill="#111"/><rect x="5.3" y="6.3" width="0.9" height="0.9" fill="#111"/><rect x="7.3" y="5.6" width="2.5" height="2.4" fill="#111"/><rect x="9.5" y="6.3" width="3.5" height="1.1" fill="#111"/></svg><div style="left:2427px;top:1469px;width:1px;height:17px;background:#5a5a5a;"></div><svg style="left:2436px;top:1470px;" width="13" height="13" viewBox="0 0 13 13"><rect x="0.5" y="0.5" width="12" height="12" fill="none" stroke="#111" stroke-width="1" stroke-dasharray="3 2"/><rect x="3.5" y="3.5" width="6" height="6" fill="none" stroke="#111" stroke-width="1"/></svg><svg style="left:2461px;top:1470px;" width="13" height="13" viewBox="0 0 13 13"><rect x="0.5" y="0.5" width="12" height="12" fill="none" stroke="#111" stroke-width="1" stroke-dasharray="8 3"/><rect x="1" y="8.5" width="3" height="3" fill="none" stroke="#111" stroke-width="1"/><path d="M10 3L6 7M6 4v3h3" fill="none" stroke="#111" stroke-width="1"/></svg><div style="left:2481px;top:1475px;width:98px;height:5px;background:#555;border-radius:2px"></div><div style="left:2513px;top:1476px;width:65px;height:4px;background:#6a9ae8;border-radius:2px"></div><div style="left:2501px;top:1472px;width:13px;height:12px;background:#626262;border:1px solid #4e4e4e;border-radius:3px"></div><svg style="left:2587px;top:1470px;" width="13" height="13" viewBox="0 0 13 13"><path d="M0.5 3.5v-3h3M9.5 0.5h3v3M12.5 9.5v3h-3M3.5 12.5h-3v-3" fill="none" stroke="#111" stroke-width="1"/><rect x="1" y="9" width="3" height="3" fill="none" stroke="#111" stroke-width="1"/><path d="M5 8L10 3M7 3h3v3" fill="none" stroke="#111" stroke-width="1"/></svg><div style="left:2626px;top:1479px;width:2px;height:2px;background:#a2a2a2;"></div><div style="left:2623px;top:1482px;width:2px;height:2px;background:#a2a2a2;"></div><div style="left:2626px;top:1482px;width:2px;height:2px;background:#a2a2a2;"></div><div style="left:2620px;top:1485px;width:2px;height:2px;background:#a2a2a2;"></div><div style="left:2623px;top:1485px;width:2px;height:2px;background:#a2a2a2;"></div><div style="left:2626px;top:1485px;width:2px;height:2px;background:#a2a2a2;"></div><div style="left:2617px;top:1488px;width:2px;height:2px;background:#a2a2a2;"></div><div style="left:2620px;top:1488px;width:2px;height:2px;background:#a2a2a2;"></div><div style="left:2623px;top:1488px;width:2px;height:2px;background:#a2a2a2;"></div><div style="left:2626px;top:1488px;width:2px;height:2px;background:#a2a2a2;"></div><svg style="left:1538px;top:36px;" width="16" height="24" viewBox="0 0 16 24"><path d="M2.3 3V18.8L5.9 15.2L8.7 20.6L11.3 19.5L8.7 14H13.3Z" fill="#fafafa" stroke="#000" stroke-width="1.6" stroke-linejoin="round"/></svg></div></body></html>
